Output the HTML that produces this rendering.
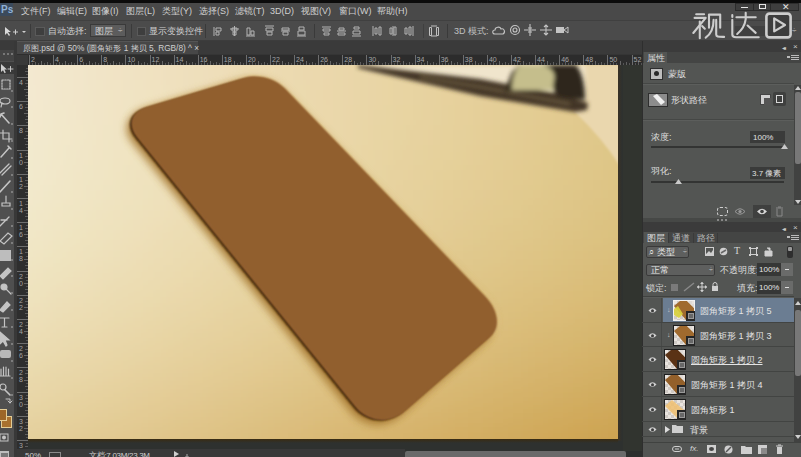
<!DOCTYPE html>
<html><head><meta charset="utf-8">
<style>
*{margin:0;padding:0;box-sizing:border-box}
html,body{width:801px;height:457px;overflow:hidden;background:#2c2e2d;font-family:"Liberation Sans",sans-serif;color:#d8d8d8}
.a{position:absolute}
.t{position:absolute;font-size:9px;line-height:10px;white-space:nowrap;color:#d0d0d0}
svg{position:absolute;overflow:visible}
</style></head><body>
<div class="a" style="left:0px;top:0px;width:801px;height:3px;background:#0b0b0b"></div>
<div class="a" style="left:0px;top:3px;width:801px;height:17px;background:#494949"></div>
<div class="a" style="left:0px;top:3px;width:13px;height:13px;background:#3b4a5c"></div>
<div class="t" style="left:1px;top:5px;font-size:10px;font-weight:bold;color:#8fb1d6">Ps</div>
<div class="t" style="left:21px;top:6px;">文件(F)</div>
<div class="t" style="left:57px;top:6px;">编辑(E)</div>
<div class="t" style="left:92px;top:6px;">图像(I)</div>
<div class="t" style="left:126px;top:6px;">图层(L)</div>
<div class="t" style="left:162px;top:6px;">类型(Y)</div>
<div class="t" style="left:199px;top:6px;">选择(S)</div>
<div class="t" style="left:235px;top:6px;">滤镜(T)</div>
<div class="t" style="left:270px;top:6px;">3D(D)</div>
<div class="t" style="left:301px;top:6px;">视图(V)</div>
<div class="t" style="left:339px;top:6px;">窗口(W)</div>
<div class="t" style="left:377px;top:6px;">帮助(H)</div>
<div class="a" style="left:735px;top:3px;width:64px;height:8px;background:#3e3e3e;border:1px solid #2c2c2c"></div>
<div class="a" style="left:741px;top:7px;width:7px;height:1px;background:#e6e6e6"></div>
<div class="a" style="left:753px;top:3px;width:1px;height:8px;background:#2a2a2a"></div>
<div class="a" style="left:759px;top:4px;width:7px;height:5px;border:1px solid #e6e6e6"></div>
<div class="a" style="left:770px;top:3px;width:1px;height:8px;background:#2a2a2a"></div>
<div class="t" style="left:782px;top:2px;font-size:9px;color:#e6e6e6">✕</div>
<div class="a" style="left:0px;top:20px;width:801px;height:21px;background:#4b4b4b;border-top:1px solid #404040;border-bottom:1px solid #3c3c3c"></div>
<svg style="left:4px;top:26px" width="22" height="12"><path d="M1 1 L1 9 L3 7 L5 10 L6 9 L4 6 L7 6 Z" fill="#d8d8d8"/><path d="M9 6 h5 M11.5 3.5 v5" stroke="#cfcfcf" stroke-width="1"/><path d="M18 5 h4 l-2 2z" fill="#cfcfcf"/></svg>
<div class="a" style="left:30px;top:24px;width:1px;height:14px;background:#3a3a3a"></div>
<div class="a" style="left:35px;top:27px;width:10px;height:9px;background:#3e3e3e;border:1px solid #5a5a5a"></div>
<div class="t" style="left:48px;top:26px;">自动选择:</div>
<div class="a" style="left:90px;top:24px;width:36px;height:13px;background:#5c5c5c;border:1px solid #3a3a3a"></div>
<div class="t" style="left:95px;top:26px;">图层</div>
<div class="t" style="left:118px;top:26px;font-size:8px">÷</div>
<div class="a" style="left:131px;top:24px;width:1px;height:14px;background:#3a3a3a"></div>
<div class="a" style="left:137px;top:27px;width:9px;height:9px;background:#3e3e3e;border:1px solid #5a5a5a"></div>
<div class="t" style="left:149px;top:26px;">显示变换控件</div>
<div class="a" style="left:205px;top:24px;width:1px;height:14px;background:#3a3a3a"></div>
<svg style="left:213px;top:25px" width="12" height="12"><path d="M1 2v9 M3 3h5v3h-5z M3 7h3v3h-3z" stroke="#b4b4b4" fill="none" stroke-width="1"/></svg>
<svg style="left:229px;top:25px" width="12" height="12"><path d="M5.5 1v10 M1 4h9 M3 3h5v3h-5z M4 7h3v3h-3z" stroke="#b4b4b4" fill="none" stroke-width="1"/></svg>
<svg style="left:245px;top:25px" width="12" height="12"><path d="M1 11h9 M2 3h3v7h-3z M6 6h3v4h-3z" stroke="#b4b4b4" fill="none" stroke-width="1"/></svg>
<svg style="left:264px;top:25px" width="12" height="12"><path d="M1 1h9 M2 3h7v3h-7z M3 7h5v3h-5z" stroke="#b4b4b4" fill="none" stroke-width="1"/></svg>
<svg style="left:280px;top:25px" width="12" height="12"><path d="M1 6h9 M2 3h7v2h-7z M3 7h5v3h-5z" stroke="#b4b4b4" fill="none" stroke-width="1"/></svg>
<svg style="left:296px;top:25px" width="12" height="12"><path d="M1 11h9 M3 2h5v3h-5z M2 6h7v4h-7z" stroke="#b4b4b4" fill="none" stroke-width="1"/></svg>
<div class="a" style="left:314px;top:24px;width:1px;height:14px;background:#3a3a3a"></div>
<svg style="left:321px;top:25px" width="12" height="12"><path d="M1 2h9 M2 4h7v2h-7z M3 8h5v2h-5z" stroke="#b4b4b4" fill="none" stroke-width="1"/></svg>
<svg style="left:336px;top:25px" width="12" height="12"><path d="M1 6h9 M3 3h5v2h-5z M2 8h7v2h-7z" stroke="#b4b4b4" fill="none" stroke-width="1"/></svg>
<svg style="left:351px;top:25px" width="12" height="12"><path d="M1 11h9 M3 2h5v2h-5z M2 6h7v3h-7z" stroke="#b4b4b4" fill="none" stroke-width="1"/></svg>
<svg style="left:371px;top:25px" width="12" height="12"><path d="M2 1v10 M4 3h2v6h-2z M8 2h2v8h-2z" stroke="#b4b4b4" fill="none" stroke-width="1"/></svg>
<svg style="left:387px;top:25px" width="12" height="12"><path d="M6 1v10 M3 3h2v6h-2z M7 2h2v8h-2z" stroke="#b4b4b4" fill="none" stroke-width="1"/></svg>
<svg style="left:403px;top:25px" width="12" height="12"><path d="M10 1v10 M2 3h2v6h-2z M6 2h2v8h-2z" stroke="#b4b4b4" fill="none" stroke-width="1"/></svg>
<div class="a" style="left:423px;top:24px;width:1px;height:14px;background:#3f3f3f"></div>
<svg style="left:428px;top:25px" width="12" height="12"><path d="M1.5 2.5h2v8h-2z M8.5 2.5h2v8h-2z M3 1h6 M3 11h6" stroke="#c0c0c0" fill="none"/></svg>
<div class="a" style="left:447px;top:24px;width:1px;height:14px;background:#3a3a3a"></div>
<div class="t" style="left:454px;top:26px;color:#c0c0c0">3D 模式:</div>
<svg style="left:490px;top:23px" width="80" height="14"><g fill="none" stroke="#c4c4c4" stroke-width="1.1"><path d="M5,11 C2,11 2,7 5,7 C5,4 10,3 11,6 C14,5 16,9 13,11 Z"/><circle cx="25" cy="7" r="4.5"/><circle cx="25" cy="7" r="2"/><path d="M40,1 v12 M34,7 h12 M38,5 h4 M38,9 h4"/><path d="M56,2 v10 M50,7 h12 M54,4 l2,-2 l2,2 M54,10 l2,2 l2,-2"/></g><rect x="66" y="4" width="8" height="6" fill="#c4c4c4"/><path d="M74,7 L78,4 V10 Z" fill="none" stroke="#c4c4c4"/></svg>
<div class="a" style="left:735px;top:26px;width:56px;height:10px;background:#404040"></div>
<div class="t" style="left:792px;top:26px;font-size:8px">÷</div>
<svg style="left:0;top:0" width="801" height="457"><g fill="none" stroke="#cdcdcd" stroke-width="2.1" stroke-linecap="round" stroke-linejoin="round"><path d="M696.2,14.3 L704.1,14.3"/><path d="M694.6,17.9 L705.7,17.9 L693.3,33"/><path d="M699.8,21.5 L699.8,38.2"/><path d="M702.1,26 L704.8,28.7"/><path d="M709,27.7 L709,14.6 L720.2,14.6 L720.2,27.7"/><path d="M713.6,19.8 C713.6,28 711,34 705.7,37.6"/><path d="M716.2,19.8 L716.2,34.5 C716.2,36.5 717.5,37 724.1,36.9"/><path d="M732.3,15 L732.3,16.9"/><path d="M732.3,19.9 L732.3,34.5 C732.3,36.5 733.5,37.2 736,37.2 L758.7,37.2"/><path d="M736.4,17.3 L755.7,17.3"/><path d="M745.7,12.8 L745.7,19.2 C745,25 741.5,30.5 737.2,34"/><path d="M747.6,25.5 L755.7,32.9"/></g><rect x="766.4" y="13.6" width="24.2" height="23.8" rx="3" fill="#3d3d3d" stroke="#cdcdcd" stroke-width="2.6"/><path d="M774.2,18.4 L774.2,31.4 L785,25 Z" fill="none" stroke="#cdcdcd" stroke-width="2.2" stroke-linejoin="round"/></svg>
<div class="a" style="left:0px;top:41px;width:801px;height:13px;background:#3a3a3a"></div>
<div class="a" style="left:17px;top:41px;width:181px;height:13px;background:#474747;border-top:1px solid #555"></div>
<div class="t" style="left:23px;top:43px;font-size:8.3px;color:#d0d0d0">原图.psd @ 50% (圆角矩形 1 拷贝 5, RGB/8) ^ ×</div>
<div class="a" style="left:0px;top:50px;width:14px;height:407px;background:#4f4f4f"></div>
<div class="a" style="left:0px;top:50px;width:14px;height:11px;background:#444"></div>
<div class="a" style="left:3px;top:53px;width:2px;height:2px;background:#777"></div>
<div class="a" style="left:7px;top:53px;width:2px;height:2px;background:#777"></div>
<div class="a" style="left:11px;top:53px;width:2px;height:2px;background:#777"></div>
<div class="a" style="left:14px;top:41px;width:3px;height:416px;background:#383838"></div>
<div class="a" style="left:0px;top:62px;width:14px;height:12px;background:#3a3a3a"></div>
<svg style="left:0;top:0" width="17" height="457"><g fill="none" stroke="#c4c4c4" stroke-width="1.2" stroke-linecap="round"><path d="M1,64 L1,72 L3,70.2 L4.6,73.2 L5.8,72.6 L4.4,69.6 L7,69.4 Z" fill="#d0d0d0" stroke="none"/><path d="M8,69 h5 M10.5,66.5 v5" stroke-width="1"/><path d="M2,80 h8 v9 h-8 z" stroke-dasharray="1.5,1.2"/><ellipse cx="5" cy="101" rx="5" ry="3"/><path d="M2,103 L1,107"/><path d="M1,114 L9,123 M1,114 l3,-1 M1,114 l-1,3" stroke-width="1.6"/><path d="M3,130 v9 h9 M0,133 h9 v9"/><path d="M1,157 L9,148 M8,146 l3,3" stroke-width="1.5"/><path d="M0,173 L9,164 M2,175 L11,166" stroke-width="1.3"/><path d="M0,192 L10,181" stroke-width="1.6"/><path d="M6,196 v6 M2,203 h8 v3 h-8 z" /><path d="M0,226 L9,217 M1,220 h6" stroke-width="1.3"/><path d="M0,241 L8,233 L12,236 L4,244 Z" /></g><rect x="0" y="250" width="11" height="11" fill="#d0d0d0" opacity="0.85"/><g fill="none" stroke="#c4c4c4" stroke-width="1.2" stroke-linecap="round"><path d="M0,276 L8,268 L11,271 L3,279 Z" fill="#c4c4c4"/><circle cx="4" cy="287" r="3" fill="#c4c4c4"/><path d="M6,289 L11,294"/><path d="M0,310 L7,302 L10,305 L3,312 Z" fill="#c4c4c4"/><path d="M0,318 h9 M4.5,318 v9 M2,327 h5"/><path d="M0,332 L0,344 L3,341 L6,346 L7,345 L5,340 L9,340 Z" fill="#c4c4c4"/><rect x="0" y="350" width="11" height="8" rx="2" fill="#b8b8b8" stroke="none"/><path d="M1,375 v-6 M3.5,375 v-8 M6,375 v-8 M8.5,375 v-6 M0,376 h10" /><circle cx="3" cy="387" r="3"/><path d="M5,390 L10,395" stroke-width="1.6"/><path d="M6,399 h4 v4 M8,401 l2,2 l2,-2" stroke-width="1"/></g><rect x="1.5" y="416.5" width="10" height="11" fill="#a8712f" stroke="#e3cc95" stroke-width="1"/><rect x="-0.5" y="409.5" width="7" height="11" fill="#9d6627" stroke="#e3cc95" stroke-width="1"/><rect x="0" y="434" width="8" height="7" fill="none" stroke="#c4c4c4"/><circle cx="4" cy="437.5" r="2" fill="#c4c4c4"/><rect x="0" y="451" width="9" height="6" fill="#bdbdbd"/><rect x="1" y="453" width="7" height="4" fill="#777"/></svg>
<div class="a" style="left:10.5px;top:89.5px;width:2px;height:2px;border-radius:1px;background:#8c8c8c"></div>
<div class="a" style="left:10.5px;top:106.4px;width:2px;height:2px;border-radius:1px;background:#8c8c8c"></div>
<div class="a" style="left:10.5px;top:123.3px;width:2px;height:2px;border-radius:1px;background:#8c8c8c"></div>
<div class="a" style="left:10.5px;top:140.2px;width:2px;height:2px;border-radius:1px;background:#8c8c8c"></div>
<div class="a" style="left:10.5px;top:157.1px;width:2px;height:2px;border-radius:1px;background:#8c8c8c"></div>
<div class="a" style="left:10.5px;top:174.0px;width:2px;height:2px;border-radius:1px;background:#8c8c8c"></div>
<div class="a" style="left:10.5px;top:190.9px;width:2px;height:2px;border-radius:1px;background:#8c8c8c"></div>
<div class="a" style="left:10.5px;top:207.8px;width:2px;height:2px;border-radius:1px;background:#8c8c8c"></div>
<div class="a" style="left:10.5px;top:224.7px;width:2px;height:2px;border-radius:1px;background:#8c8c8c"></div>
<div class="a" style="left:10.5px;top:241.6px;width:2px;height:2px;border-radius:1px;background:#8c8c8c"></div>
<div class="a" style="left:10.5px;top:258.5px;width:2px;height:2px;border-radius:1px;background:#8c8c8c"></div>
<div class="a" style="left:10.5px;top:275.4px;width:2px;height:2px;border-radius:1px;background:#8c8c8c"></div>
<div class="a" style="left:10.5px;top:292.3px;width:2px;height:2px;border-radius:1px;background:#8c8c8c"></div>
<div class="a" style="left:10.5px;top:309.2px;width:2px;height:2px;border-radius:1px;background:#8c8c8c"></div>
<div class="a" style="left:10.5px;top:326.1px;width:2px;height:2px;border-radius:1px;background:#8c8c8c"></div>
<div class="a" style="left:10.5px;top:343.0px;width:2px;height:2px;border-radius:1px;background:#8c8c8c"></div>
<div class="a" style="left:10.5px;top:359.9px;width:2px;height:2px;border-radius:1px;background:#8c8c8c"></div>
<div class="a" style="left:10.5px;top:376.8px;width:2px;height:2px;border-radius:1px;background:#8c8c8c"></div>
<div class="a" style="left:10.5px;top:393.7px;width:2px;height:2px;border-radius:1px;background:#8c8c8c"></div>
<div class="a" style="left:17px;top:54px;width:625px;height:11px;background:#2c2c2c;border-top:1px solid #353535"></div>
<div class="a" style="left:17px;top:54px;width:11px;height:397px;background:#2e2e2e"></div>
<div class="a" style="left:29.0px;top:55px;width:1px;height:10px;background:#6e6e6e"></div>
<div class="t" style="left:31.0px;top:56px;font-size:7px;line-height:7px;color:#a4a4a4">2</div>
<div class="a" style="left:32.0px;top:63px;width:1px;height:2px;background:#555"></div>
<div class="a" style="left:35.0px;top:62px;width:1px;height:3px;background:#5e5e5e"></div>
<div class="a" style="left:38.0px;top:63px;width:1px;height:2px;background:#555"></div>
<div class="a" style="left:41.1px;top:61px;width:1px;height:4px;background:#666"></div>
<div class="a" style="left:44.1px;top:63px;width:1px;height:2px;background:#555"></div>
<div class="a" style="left:47.1px;top:62px;width:1px;height:3px;background:#5e5e5e"></div>
<div class="a" style="left:50.1px;top:63px;width:1px;height:2px;background:#555"></div>
<div class="a" style="left:53.1px;top:55px;width:1px;height:10px;background:#6e6e6e"></div>
<div class="t" style="left:55.1px;top:56px;font-size:7px;line-height:7px;color:#a4a4a4">4</div>
<div class="a" style="left:56.1px;top:63px;width:1px;height:2px;background:#555"></div>
<div class="a" style="left:59.1px;top:62px;width:1px;height:3px;background:#5e5e5e"></div>
<div class="a" style="left:62.1px;top:63px;width:1px;height:2px;background:#555"></div>
<div class="a" style="left:65.2px;top:61px;width:1px;height:4px;background:#666"></div>
<div class="a" style="left:68.2px;top:63px;width:1px;height:2px;background:#555"></div>
<div class="a" style="left:71.2px;top:62px;width:1px;height:3px;background:#5e5e5e"></div>
<div class="a" style="left:74.2px;top:63px;width:1px;height:2px;background:#555"></div>
<div class="a" style="left:77.2px;top:55px;width:1px;height:10px;background:#6e6e6e"></div>
<div class="t" style="left:79.2px;top:56px;font-size:7px;line-height:7px;color:#a4a4a4">6</div>
<div class="a" style="left:80.2px;top:63px;width:1px;height:2px;background:#555"></div>
<div class="a" style="left:83.2px;top:62px;width:1px;height:3px;background:#5e5e5e"></div>
<div class="a" style="left:86.2px;top:63px;width:1px;height:2px;background:#555"></div>
<div class="a" style="left:89.3px;top:61px;width:1px;height:4px;background:#666"></div>
<div class="a" style="left:92.3px;top:63px;width:1px;height:2px;background:#555"></div>
<div class="a" style="left:95.3px;top:62px;width:1px;height:3px;background:#5e5e5e"></div>
<div class="a" style="left:98.3px;top:63px;width:1px;height:2px;background:#555"></div>
<div class="a" style="left:101.3px;top:55px;width:1px;height:10px;background:#6e6e6e"></div>
<div class="t" style="left:103.3px;top:56px;font-size:7px;line-height:7px;color:#a4a4a4">8</div>
<div class="a" style="left:104.3px;top:63px;width:1px;height:2px;background:#555"></div>
<div class="a" style="left:107.3px;top:62px;width:1px;height:3px;background:#5e5e5e"></div>
<div class="a" style="left:110.3px;top:63px;width:1px;height:2px;background:#555"></div>
<div class="a" style="left:113.4px;top:61px;width:1px;height:4px;background:#666"></div>
<div class="a" style="left:116.4px;top:63px;width:1px;height:2px;background:#555"></div>
<div class="a" style="left:119.4px;top:62px;width:1px;height:3px;background:#5e5e5e"></div>
<div class="a" style="left:122.4px;top:63px;width:1px;height:2px;background:#555"></div>
<div class="a" style="left:125.4px;top:55px;width:1px;height:10px;background:#6e6e6e"></div>
<div class="t" style="left:127.4px;top:56px;font-size:7px;line-height:7px;color:#a4a4a4">10</div>
<div class="a" style="left:128.4px;top:63px;width:1px;height:2px;background:#555"></div>
<div class="a" style="left:131.4px;top:62px;width:1px;height:3px;background:#5e5e5e"></div>
<div class="a" style="left:134.4px;top:63px;width:1px;height:2px;background:#555"></div>
<div class="a" style="left:137.5px;top:61px;width:1px;height:4px;background:#666"></div>
<div class="a" style="left:140.5px;top:63px;width:1px;height:2px;background:#555"></div>
<div class="a" style="left:143.5px;top:62px;width:1px;height:3px;background:#5e5e5e"></div>
<div class="a" style="left:146.5px;top:63px;width:1px;height:2px;background:#555"></div>
<div class="a" style="left:149.5px;top:55px;width:1px;height:10px;background:#6e6e6e"></div>
<div class="t" style="left:151.5px;top:56px;font-size:7px;line-height:7px;color:#a4a4a4">12</div>
<div class="a" style="left:152.5px;top:63px;width:1px;height:2px;background:#555"></div>
<div class="a" style="left:155.5px;top:62px;width:1px;height:3px;background:#5e5e5e"></div>
<div class="a" style="left:158.5px;top:63px;width:1px;height:2px;background:#555"></div>
<div class="a" style="left:161.6px;top:61px;width:1px;height:4px;background:#666"></div>
<div class="a" style="left:164.6px;top:63px;width:1px;height:2px;background:#555"></div>
<div class="a" style="left:167.6px;top:62px;width:1px;height:3px;background:#5e5e5e"></div>
<div class="a" style="left:170.6px;top:63px;width:1px;height:2px;background:#555"></div>
<div class="a" style="left:173.6px;top:55px;width:1px;height:10px;background:#6e6e6e"></div>
<div class="t" style="left:175.6px;top:56px;font-size:7px;line-height:7px;color:#a4a4a4">14</div>
<div class="a" style="left:176.6px;top:63px;width:1px;height:2px;background:#555"></div>
<div class="a" style="left:179.6px;top:62px;width:1px;height:3px;background:#5e5e5e"></div>
<div class="a" style="left:182.6px;top:63px;width:1px;height:2px;background:#555"></div>
<div class="a" style="left:185.7px;top:61px;width:1px;height:4px;background:#666"></div>
<div class="a" style="left:188.7px;top:63px;width:1px;height:2px;background:#555"></div>
<div class="a" style="left:191.7px;top:62px;width:1px;height:3px;background:#5e5e5e"></div>
<div class="a" style="left:194.7px;top:63px;width:1px;height:2px;background:#555"></div>
<div class="a" style="left:197.7px;top:55px;width:1px;height:10px;background:#6e6e6e"></div>
<div class="t" style="left:199.7px;top:56px;font-size:7px;line-height:7px;color:#a4a4a4">16</div>
<div class="a" style="left:200.7px;top:63px;width:1px;height:2px;background:#555"></div>
<div class="a" style="left:203.7px;top:62px;width:1px;height:3px;background:#5e5e5e"></div>
<div class="a" style="left:206.7px;top:63px;width:1px;height:2px;background:#555"></div>
<div class="a" style="left:209.8px;top:61px;width:1px;height:4px;background:#666"></div>
<div class="a" style="left:212.8px;top:63px;width:1px;height:2px;background:#555"></div>
<div class="a" style="left:215.8px;top:62px;width:1px;height:3px;background:#5e5e5e"></div>
<div class="a" style="left:218.8px;top:63px;width:1px;height:2px;background:#555"></div>
<div class="a" style="left:221.8px;top:55px;width:1px;height:10px;background:#6e6e6e"></div>
<div class="t" style="left:223.8px;top:56px;font-size:7px;line-height:7px;color:#a4a4a4">18</div>
<div class="a" style="left:224.8px;top:63px;width:1px;height:2px;background:#555"></div>
<div class="a" style="left:227.8px;top:62px;width:1px;height:3px;background:#5e5e5e"></div>
<div class="a" style="left:230.8px;top:63px;width:1px;height:2px;background:#555"></div>
<div class="a" style="left:233.9px;top:61px;width:1px;height:4px;background:#666"></div>
<div class="a" style="left:236.9px;top:63px;width:1px;height:2px;background:#555"></div>
<div class="a" style="left:239.9px;top:62px;width:1px;height:3px;background:#5e5e5e"></div>
<div class="a" style="left:242.9px;top:63px;width:1px;height:2px;background:#555"></div>
<div class="a" style="left:245.9px;top:55px;width:1px;height:10px;background:#6e6e6e"></div>
<div class="t" style="left:247.9px;top:56px;font-size:7px;line-height:7px;color:#a4a4a4">20</div>
<div class="a" style="left:248.9px;top:63px;width:1px;height:2px;background:#555"></div>
<div class="a" style="left:251.9px;top:62px;width:1px;height:3px;background:#5e5e5e"></div>
<div class="a" style="left:254.9px;top:63px;width:1px;height:2px;background:#555"></div>
<div class="a" style="left:257.9px;top:61px;width:1px;height:4px;background:#666"></div>
<div class="a" style="left:261.0px;top:63px;width:1px;height:2px;background:#555"></div>
<div class="a" style="left:264.0px;top:62px;width:1px;height:3px;background:#5e5e5e"></div>
<div class="a" style="left:267.0px;top:63px;width:1px;height:2px;background:#555"></div>
<div class="a" style="left:270.0px;top:55px;width:1px;height:10px;background:#6e6e6e"></div>
<div class="t" style="left:272.0px;top:56px;font-size:7px;line-height:7px;color:#a4a4a4">22</div>
<div class="a" style="left:273.0px;top:63px;width:1px;height:2px;background:#555"></div>
<div class="a" style="left:276.0px;top:62px;width:1px;height:3px;background:#5e5e5e"></div>
<div class="a" style="left:279.0px;top:63px;width:1px;height:2px;background:#555"></div>
<div class="a" style="left:282.1px;top:61px;width:1px;height:4px;background:#666"></div>
<div class="a" style="left:285.1px;top:63px;width:1px;height:2px;background:#555"></div>
<div class="a" style="left:288.1px;top:62px;width:1px;height:3px;background:#5e5e5e"></div>
<div class="a" style="left:291.1px;top:63px;width:1px;height:2px;background:#555"></div>
<div class="a" style="left:294.1px;top:55px;width:1px;height:10px;background:#6e6e6e"></div>
<div class="t" style="left:296.1px;top:56px;font-size:7px;line-height:7px;color:#a4a4a4">24</div>
<div class="a" style="left:297.1px;top:63px;width:1px;height:2px;background:#555"></div>
<div class="a" style="left:300.1px;top:62px;width:1px;height:3px;background:#5e5e5e"></div>
<div class="a" style="left:303.1px;top:63px;width:1px;height:2px;background:#555"></div>
<div class="a" style="left:306.1px;top:61px;width:1px;height:4px;background:#666"></div>
<div class="a" style="left:309.2px;top:63px;width:1px;height:2px;background:#555"></div>
<div class="a" style="left:312.2px;top:62px;width:1px;height:3px;background:#5e5e5e"></div>
<div class="a" style="left:315.2px;top:63px;width:1px;height:2px;background:#555"></div>
<div class="a" style="left:318.2px;top:55px;width:1px;height:10px;background:#6e6e6e"></div>
<div class="t" style="left:320.2px;top:56px;font-size:7px;line-height:7px;color:#a4a4a4">26</div>
<div class="a" style="left:321.2px;top:63px;width:1px;height:2px;background:#555"></div>
<div class="a" style="left:324.2px;top:62px;width:1px;height:3px;background:#5e5e5e"></div>
<div class="a" style="left:327.2px;top:63px;width:1px;height:2px;background:#555"></div>
<div class="a" style="left:330.2px;top:61px;width:1px;height:4px;background:#666"></div>
<div class="a" style="left:333.3px;top:63px;width:1px;height:2px;background:#555"></div>
<div class="a" style="left:336.3px;top:62px;width:1px;height:3px;background:#5e5e5e"></div>
<div class="a" style="left:339.3px;top:63px;width:1px;height:2px;background:#555"></div>
<div class="a" style="left:342.3px;top:55px;width:1px;height:10px;background:#6e6e6e"></div>
<div class="t" style="left:344.3px;top:56px;font-size:7px;line-height:7px;color:#a4a4a4">28</div>
<div class="a" style="left:345.3px;top:63px;width:1px;height:2px;background:#555"></div>
<div class="a" style="left:348.3px;top:62px;width:1px;height:3px;background:#5e5e5e"></div>
<div class="a" style="left:351.3px;top:63px;width:1px;height:2px;background:#555"></div>
<div class="a" style="left:354.4px;top:61px;width:1px;height:4px;background:#666"></div>
<div class="a" style="left:357.4px;top:63px;width:1px;height:2px;background:#555"></div>
<div class="a" style="left:360.4px;top:62px;width:1px;height:3px;background:#5e5e5e"></div>
<div class="a" style="left:363.4px;top:63px;width:1px;height:2px;background:#555"></div>
<div class="a" style="left:366.4px;top:55px;width:1px;height:10px;background:#6e6e6e"></div>
<div class="t" style="left:368.4px;top:56px;font-size:7px;line-height:7px;color:#a4a4a4">30</div>
<div class="a" style="left:369.4px;top:63px;width:1px;height:2px;background:#555"></div>
<div class="a" style="left:372.4px;top:62px;width:1px;height:3px;background:#5e5e5e"></div>
<div class="a" style="left:375.4px;top:63px;width:1px;height:2px;background:#555"></div>
<div class="a" style="left:378.4px;top:61px;width:1px;height:4px;background:#666"></div>
<div class="a" style="left:381.5px;top:63px;width:1px;height:2px;background:#555"></div>
<div class="a" style="left:384.5px;top:62px;width:1px;height:3px;background:#5e5e5e"></div>
<div class="a" style="left:387.5px;top:63px;width:1px;height:2px;background:#555"></div>
<div class="a" style="left:390.5px;top:55px;width:1px;height:10px;background:#6e6e6e"></div>
<div class="t" style="left:392.5px;top:56px;font-size:7px;line-height:7px;color:#a4a4a4">32</div>
<div class="a" style="left:393.5px;top:63px;width:1px;height:2px;background:#555"></div>
<div class="a" style="left:396.5px;top:62px;width:1px;height:3px;background:#5e5e5e"></div>
<div class="a" style="left:399.5px;top:63px;width:1px;height:2px;background:#555"></div>
<div class="a" style="left:402.6px;top:61px;width:1px;height:4px;background:#666"></div>
<div class="a" style="left:405.6px;top:63px;width:1px;height:2px;background:#555"></div>
<div class="a" style="left:408.6px;top:62px;width:1px;height:3px;background:#5e5e5e"></div>
<div class="a" style="left:411.6px;top:63px;width:1px;height:2px;background:#555"></div>
<div class="a" style="left:414.6px;top:55px;width:1px;height:10px;background:#6e6e6e"></div>
<div class="t" style="left:416.6px;top:56px;font-size:7px;line-height:7px;color:#a4a4a4">34</div>
<div class="a" style="left:417.6px;top:63px;width:1px;height:2px;background:#555"></div>
<div class="a" style="left:420.6px;top:62px;width:1px;height:3px;background:#5e5e5e"></div>
<div class="a" style="left:423.6px;top:63px;width:1px;height:2px;background:#555"></div>
<div class="a" style="left:426.6px;top:61px;width:1px;height:4px;background:#666"></div>
<div class="a" style="left:429.7px;top:63px;width:1px;height:2px;background:#555"></div>
<div class="a" style="left:432.7px;top:62px;width:1px;height:3px;background:#5e5e5e"></div>
<div class="a" style="left:435.7px;top:63px;width:1px;height:2px;background:#555"></div>
<div class="a" style="left:438.7px;top:55px;width:1px;height:10px;background:#6e6e6e"></div>
<div class="t" style="left:440.7px;top:56px;font-size:7px;line-height:7px;color:#a4a4a4">36</div>
<div class="a" style="left:441.7px;top:63px;width:1px;height:2px;background:#555"></div>
<div class="a" style="left:444.7px;top:62px;width:1px;height:3px;background:#5e5e5e"></div>
<div class="a" style="left:447.7px;top:63px;width:1px;height:2px;background:#555"></div>
<div class="a" style="left:450.8px;top:61px;width:1px;height:4px;background:#666"></div>
<div class="a" style="left:453.8px;top:63px;width:1px;height:2px;background:#555"></div>
<div class="a" style="left:456.8px;top:62px;width:1px;height:3px;background:#5e5e5e"></div>
<div class="a" style="left:459.8px;top:63px;width:1px;height:2px;background:#555"></div>
<div class="a" style="left:462.8px;top:55px;width:1px;height:10px;background:#6e6e6e"></div>
<div class="t" style="left:464.8px;top:56px;font-size:7px;line-height:7px;color:#a4a4a4">38</div>
<div class="a" style="left:465.8px;top:63px;width:1px;height:2px;background:#555"></div>
<div class="a" style="left:468.8px;top:62px;width:1px;height:3px;background:#5e5e5e"></div>
<div class="a" style="left:471.8px;top:63px;width:1px;height:2px;background:#555"></div>
<div class="a" style="left:474.9px;top:61px;width:1px;height:4px;background:#666"></div>
<div class="a" style="left:477.9px;top:63px;width:1px;height:2px;background:#555"></div>
<div class="a" style="left:480.9px;top:62px;width:1px;height:3px;background:#5e5e5e"></div>
<div class="a" style="left:483.9px;top:63px;width:1px;height:2px;background:#555"></div>
<div class="a" style="left:486.9px;top:55px;width:1px;height:10px;background:#6e6e6e"></div>
<div class="t" style="left:488.9px;top:56px;font-size:7px;line-height:7px;color:#a4a4a4">40</div>
<div class="a" style="left:489.9px;top:63px;width:1px;height:2px;background:#555"></div>
<div class="a" style="left:492.9px;top:62px;width:1px;height:3px;background:#5e5e5e"></div>
<div class="a" style="left:495.9px;top:63px;width:1px;height:2px;background:#555"></div>
<div class="a" style="left:498.9px;top:61px;width:1px;height:4px;background:#666"></div>
<div class="a" style="left:502.0px;top:63px;width:1px;height:2px;background:#555"></div>
<div class="a" style="left:505.0px;top:62px;width:1px;height:3px;background:#5e5e5e"></div>
<div class="a" style="left:508.0px;top:63px;width:1px;height:2px;background:#555"></div>
<div class="a" style="left:511.0px;top:55px;width:1px;height:10px;background:#6e6e6e"></div>
<div class="t" style="left:513.0px;top:56px;font-size:7px;line-height:7px;color:#a4a4a4">42</div>
<div class="a" style="left:514.0px;top:63px;width:1px;height:2px;background:#555"></div>
<div class="a" style="left:517.0px;top:62px;width:1px;height:3px;background:#5e5e5e"></div>
<div class="a" style="left:520.0px;top:63px;width:1px;height:2px;background:#555"></div>
<div class="a" style="left:523.0px;top:61px;width:1px;height:4px;background:#666"></div>
<div class="a" style="left:526.1px;top:63px;width:1px;height:2px;background:#555"></div>
<div class="a" style="left:529.1px;top:62px;width:1px;height:3px;background:#5e5e5e"></div>
<div class="a" style="left:532.1px;top:63px;width:1px;height:2px;background:#555"></div>
<div class="a" style="left:535.1px;top:55px;width:1px;height:10px;background:#6e6e6e"></div>
<div class="t" style="left:537.1px;top:56px;font-size:7px;line-height:7px;color:#a4a4a4">44</div>
<div class="a" style="left:538.1px;top:63px;width:1px;height:2px;background:#555"></div>
<div class="a" style="left:541.1px;top:62px;width:1px;height:3px;background:#5e5e5e"></div>
<div class="a" style="left:544.1px;top:63px;width:1px;height:2px;background:#555"></div>
<div class="a" style="left:547.1px;top:61px;width:1px;height:4px;background:#666"></div>
<div class="a" style="left:550.2px;top:63px;width:1px;height:2px;background:#555"></div>
<div class="a" style="left:553.2px;top:62px;width:1px;height:3px;background:#5e5e5e"></div>
<div class="a" style="left:556.2px;top:63px;width:1px;height:2px;background:#555"></div>
<div class="a" style="left:559.2px;top:55px;width:1px;height:10px;background:#6e6e6e"></div>
<div class="t" style="left:561.2px;top:56px;font-size:7px;line-height:7px;color:#a4a4a4">46</div>
<div class="a" style="left:562.2px;top:63px;width:1px;height:2px;background:#555"></div>
<div class="a" style="left:565.2px;top:62px;width:1px;height:3px;background:#5e5e5e"></div>
<div class="a" style="left:568.2px;top:63px;width:1px;height:2px;background:#555"></div>
<div class="a" style="left:571.2px;top:61px;width:1px;height:4px;background:#666"></div>
<div class="a" style="left:574.3px;top:63px;width:1px;height:2px;background:#555"></div>
<div class="a" style="left:577.3px;top:62px;width:1px;height:3px;background:#5e5e5e"></div>
<div class="a" style="left:580.3px;top:63px;width:1px;height:2px;background:#555"></div>
<div class="a" style="left:583.3px;top:55px;width:1px;height:10px;background:#6e6e6e"></div>
<div class="t" style="left:585.3px;top:56px;font-size:7px;line-height:7px;color:#a4a4a4">48</div>
<div class="a" style="left:586.3px;top:63px;width:1px;height:2px;background:#555"></div>
<div class="a" style="left:589.3px;top:62px;width:1px;height:3px;background:#5e5e5e"></div>
<div class="a" style="left:592.3px;top:63px;width:1px;height:2px;background:#555"></div>
<div class="a" style="left:595.4px;top:61px;width:1px;height:4px;background:#666"></div>
<div class="a" style="left:598.4px;top:63px;width:1px;height:2px;background:#555"></div>
<div class="a" style="left:601.4px;top:62px;width:1px;height:3px;background:#5e5e5e"></div>
<div class="a" style="left:604.4px;top:63px;width:1px;height:2px;background:#555"></div>
<div class="a" style="left:607.4px;top:55px;width:1px;height:10px;background:#6e6e6e"></div>
<div class="t" style="left:609.4px;top:56px;font-size:7px;line-height:7px;color:#a4a4a4">50</div>
<div class="a" style="left:610.4px;top:63px;width:1px;height:2px;background:#555"></div>
<div class="a" style="left:613.4px;top:62px;width:1px;height:3px;background:#5e5e5e"></div>
<div class="a" style="left:616.4px;top:63px;width:1px;height:2px;background:#555"></div>
<div class="a" style="left:619.5px;top:61px;width:1px;height:4px;background:#666"></div>
<div class="a" style="left:622.5px;top:63px;width:1px;height:2px;background:#555"></div>
<div class="a" style="left:625.5px;top:62px;width:1px;height:3px;background:#5e5e5e"></div>
<div class="a" style="left:628.5px;top:63px;width:1px;height:2px;background:#555"></div>
<div class="a" style="left:631.5px;top:55px;width:1px;height:10px;background:#6e6e6e"></div>
<div class="t" style="left:633.5px;top:56px;font-size:7px;line-height:7px;color:#a4a4a4">52</div>
<div class="a" style="left:634.5px;top:63px;width:1px;height:2px;background:#555"></div>
<div class="a" style="left:637.5px;top:62px;width:1px;height:3px;background:#5e5e5e"></div>
<div class="a" style="left:640.5px;top:63px;width:1px;height:2px;background:#555"></div>
<div class="a" style="left:26px;top:67.9px;width:2px;height:1px;background:#555"></div>
<div class="a" style="left:25px;top:71.0px;width:3px;height:1px;background:#5e5e5e"></div>
<div class="a" style="left:26px;top:74.0px;width:2px;height:1px;background:#555"></div>
<div class="a" style="left:17px;top:77.0px;width:11px;height:1px;background:#6e6e6e"></div>
<div class="t" style="left:19px;top:79.0px;font-size:7px;line-height:7px;width:6px;white-space:normal;word-break:break-all;color:#a4a4a4">4</div>
<div class="a" style="left:26px;top:80.0px;width:2px;height:1px;background:#555"></div>
<div class="a" style="left:25px;top:83.0px;width:3px;height:1px;background:#5e5e5e"></div>
<div class="a" style="left:26px;top:86.1px;width:2px;height:1px;background:#555"></div>
<div class="a" style="left:24px;top:89.1px;width:4px;height:1px;background:#666"></div>
<div class="a" style="left:26px;top:92.1px;width:2px;height:1px;background:#555"></div>
<div class="a" style="left:25px;top:95.2px;width:3px;height:1px;background:#5e5e5e"></div>
<div class="a" style="left:26px;top:98.2px;width:2px;height:1px;background:#555"></div>
<div class="a" style="left:17px;top:101.2px;width:11px;height:1px;background:#6e6e6e"></div>
<div class="t" style="left:19px;top:103.2px;font-size:7px;line-height:7px;width:6px;white-space:normal;word-break:break-all;color:#a4a4a4">6</div>
<div class="a" style="left:26px;top:104.2px;width:2px;height:1px;background:#555"></div>
<div class="a" style="left:25px;top:107.2px;width:3px;height:1px;background:#5e5e5e"></div>
<div class="a" style="left:26px;top:110.3px;width:2px;height:1px;background:#555"></div>
<div class="a" style="left:24px;top:113.3px;width:4px;height:1px;background:#666"></div>
<div class="a" style="left:26px;top:116.3px;width:2px;height:1px;background:#555"></div>
<div class="a" style="left:25px;top:119.3px;width:3px;height:1px;background:#5e5e5e"></div>
<div class="a" style="left:26px;top:122.4px;width:2px;height:1px;background:#555"></div>
<div class="a" style="left:17px;top:125.4px;width:11px;height:1px;background:#6e6e6e"></div>
<div class="t" style="left:19px;top:127.4px;font-size:7px;line-height:7px;width:6px;white-space:normal;word-break:break-all;color:#a4a4a4">8</div>
<div class="a" style="left:26px;top:128.4px;width:2px;height:1px;background:#555"></div>
<div class="a" style="left:25px;top:131.4px;width:3px;height:1px;background:#5e5e5e"></div>
<div class="a" style="left:26px;top:134.5px;width:2px;height:1px;background:#555"></div>
<div class="a" style="left:24px;top:137.5px;width:4px;height:1px;background:#666"></div>
<div class="a" style="left:26px;top:140.5px;width:2px;height:1px;background:#555"></div>
<div class="a" style="left:25px;top:143.6px;width:3px;height:1px;background:#5e5e5e"></div>
<div class="a" style="left:26px;top:146.6px;width:2px;height:1px;background:#555"></div>
<div class="a" style="left:17px;top:149.6px;width:11px;height:1px;background:#6e6e6e"></div>
<div class="t" style="left:19px;top:151.6px;font-size:7px;line-height:7px;width:6px;white-space:normal;word-break:break-all;color:#a4a4a4">10</div>
<div class="a" style="left:26px;top:152.6px;width:2px;height:1px;background:#555"></div>
<div class="a" style="left:25px;top:155.7px;width:3px;height:1px;background:#5e5e5e"></div>
<div class="a" style="left:26px;top:158.7px;width:2px;height:1px;background:#555"></div>
<div class="a" style="left:24px;top:161.7px;width:4px;height:1px;background:#666"></div>
<div class="a" style="left:26px;top:164.7px;width:2px;height:1px;background:#555"></div>
<div class="a" style="left:25px;top:167.8px;width:3px;height:1px;background:#5e5e5e"></div>
<div class="a" style="left:26px;top:170.8px;width:2px;height:1px;background:#555"></div>
<div class="a" style="left:17px;top:173.8px;width:11px;height:1px;background:#6e6e6e"></div>
<div class="t" style="left:19px;top:175.8px;font-size:7px;line-height:7px;width:6px;white-space:normal;word-break:break-all;color:#a4a4a4">12</div>
<div class="a" style="left:26px;top:176.8px;width:2px;height:1px;background:#555"></div>
<div class="a" style="left:25px;top:179.8px;width:3px;height:1px;background:#5e5e5e"></div>
<div class="a" style="left:26px;top:182.9px;width:2px;height:1px;background:#555"></div>
<div class="a" style="left:24px;top:185.9px;width:4px;height:1px;background:#666"></div>
<div class="a" style="left:26px;top:188.9px;width:2px;height:1px;background:#555"></div>
<div class="a" style="left:25px;top:191.9px;width:3px;height:1px;background:#5e5e5e"></div>
<div class="a" style="left:26px;top:195.0px;width:2px;height:1px;background:#555"></div>
<div class="a" style="left:17px;top:198.0px;width:11px;height:1px;background:#6e6e6e"></div>
<div class="t" style="left:19px;top:200.0px;font-size:7px;line-height:7px;width:6px;white-space:normal;word-break:break-all;color:#a4a4a4">14</div>
<div class="a" style="left:26px;top:201.0px;width:2px;height:1px;background:#555"></div>
<div class="a" style="left:25px;top:204.0px;width:3px;height:1px;background:#5e5e5e"></div>
<div class="a" style="left:26px;top:207.1px;width:2px;height:1px;background:#555"></div>
<div class="a" style="left:24px;top:210.1px;width:4px;height:1px;background:#666"></div>
<div class="a" style="left:26px;top:213.1px;width:2px;height:1px;background:#555"></div>
<div class="a" style="left:25px;top:216.1px;width:3px;height:1px;background:#5e5e5e"></div>
<div class="a" style="left:26px;top:219.2px;width:2px;height:1px;background:#555"></div>
<div class="a" style="left:17px;top:222.2px;width:11px;height:1px;background:#6e6e6e"></div>
<div class="t" style="left:19px;top:224.2px;font-size:7px;line-height:7px;width:6px;white-space:normal;word-break:break-all;color:#a4a4a4">16</div>
<div class="a" style="left:26px;top:225.2px;width:2px;height:1px;background:#555"></div>
<div class="a" style="left:25px;top:228.2px;width:3px;height:1px;background:#5e5e5e"></div>
<div class="a" style="left:26px;top:231.3px;width:2px;height:1px;background:#555"></div>
<div class="a" style="left:24px;top:234.3px;width:4px;height:1px;background:#666"></div>
<div class="a" style="left:26px;top:237.3px;width:2px;height:1px;background:#555"></div>
<div class="a" style="left:25px;top:240.3px;width:3px;height:1px;background:#5e5e5e"></div>
<div class="a" style="left:26px;top:243.4px;width:2px;height:1px;background:#555"></div>
<div class="a" style="left:17px;top:246.4px;width:11px;height:1px;background:#6e6e6e"></div>
<div class="t" style="left:19px;top:248.4px;font-size:7px;line-height:7px;width:6px;white-space:normal;word-break:break-all;color:#a4a4a4">18</div>
<div class="a" style="left:26px;top:249.4px;width:2px;height:1px;background:#555"></div>
<div class="a" style="left:25px;top:252.4px;width:3px;height:1px;background:#5e5e5e"></div>
<div class="a" style="left:26px;top:255.5px;width:2px;height:1px;background:#555"></div>
<div class="a" style="left:24px;top:258.5px;width:4px;height:1px;background:#666"></div>
<div class="a" style="left:26px;top:261.5px;width:2px;height:1px;background:#555"></div>
<div class="a" style="left:25px;top:264.6px;width:3px;height:1px;background:#5e5e5e"></div>
<div class="a" style="left:26px;top:267.6px;width:2px;height:1px;background:#555"></div>
<div class="a" style="left:17px;top:270.6px;width:11px;height:1px;background:#6e6e6e"></div>
<div class="t" style="left:19px;top:272.6px;font-size:7px;line-height:7px;width:6px;white-space:normal;word-break:break-all;color:#a4a4a4">20</div>
<div class="a" style="left:26px;top:273.6px;width:2px;height:1px;background:#555"></div>
<div class="a" style="left:25px;top:276.6px;width:3px;height:1px;background:#5e5e5e"></div>
<div class="a" style="left:26px;top:279.7px;width:2px;height:1px;background:#555"></div>
<div class="a" style="left:24px;top:282.7px;width:4px;height:1px;background:#666"></div>
<div class="a" style="left:26px;top:285.7px;width:2px;height:1px;background:#555"></div>
<div class="a" style="left:25px;top:288.8px;width:3px;height:1px;background:#5e5e5e"></div>
<div class="a" style="left:26px;top:291.8px;width:2px;height:1px;background:#555"></div>
<div class="a" style="left:17px;top:294.8px;width:11px;height:1px;background:#6e6e6e"></div>
<div class="t" style="left:19px;top:296.8px;font-size:7px;line-height:7px;width:6px;white-space:normal;word-break:break-all;color:#a4a4a4">22</div>
<div class="a" style="left:26px;top:297.8px;width:2px;height:1px;background:#555"></div>
<div class="a" style="left:25px;top:300.9px;width:3px;height:1px;background:#5e5e5e"></div>
<div class="a" style="left:26px;top:303.9px;width:2px;height:1px;background:#555"></div>
<div class="a" style="left:24px;top:306.9px;width:4px;height:1px;background:#666"></div>
<div class="a" style="left:26px;top:309.9px;width:2px;height:1px;background:#555"></div>
<div class="a" style="left:25px;top:312.9px;width:3px;height:1px;background:#5e5e5e"></div>
<div class="a" style="left:26px;top:316.0px;width:2px;height:1px;background:#555"></div>
<div class="a" style="left:17px;top:319.0px;width:11px;height:1px;background:#6e6e6e"></div>
<div class="t" style="left:19px;top:321.0px;font-size:7px;line-height:7px;width:6px;white-space:normal;word-break:break-all;color:#a4a4a4">24</div>
<div class="a" style="left:26px;top:322.0px;width:2px;height:1px;background:#555"></div>
<div class="a" style="left:25px;top:325.1px;width:3px;height:1px;background:#5e5e5e"></div>
<div class="a" style="left:26px;top:328.1px;width:2px;height:1px;background:#555"></div>
<div class="a" style="left:24px;top:331.1px;width:4px;height:1px;background:#666"></div>
<div class="a" style="left:26px;top:334.1px;width:2px;height:1px;background:#555"></div>
<div class="a" style="left:25px;top:337.2px;width:3px;height:1px;background:#5e5e5e"></div>
<div class="a" style="left:26px;top:340.2px;width:2px;height:1px;background:#555"></div>
<div class="a" style="left:17px;top:343.2px;width:11px;height:1px;background:#6e6e6e"></div>
<div class="t" style="left:19px;top:345.2px;font-size:7px;line-height:7px;width:6px;white-space:normal;word-break:break-all;color:#a4a4a4">26</div>
<div class="a" style="left:26px;top:346.2px;width:2px;height:1px;background:#555"></div>
<div class="a" style="left:25px;top:349.2px;width:3px;height:1px;background:#5e5e5e"></div>
<div class="a" style="left:26px;top:352.3px;width:2px;height:1px;background:#555"></div>
<div class="a" style="left:24px;top:355.3px;width:4px;height:1px;background:#666"></div>
<div class="a" style="left:26px;top:358.3px;width:2px;height:1px;background:#555"></div>
<div class="a" style="left:25px;top:361.4px;width:3px;height:1px;background:#5e5e5e"></div>
<div class="a" style="left:26px;top:364.4px;width:2px;height:1px;background:#555"></div>
<div class="a" style="left:17px;top:367.4px;width:11px;height:1px;background:#6e6e6e"></div>
<div class="t" style="left:19px;top:369.4px;font-size:7px;line-height:7px;width:6px;white-space:normal;word-break:break-all;color:#a4a4a4">28</div>
<div class="a" style="left:26px;top:370.4px;width:2px;height:1px;background:#555"></div>
<div class="a" style="left:25px;top:373.4px;width:3px;height:1px;background:#5e5e5e"></div>
<div class="a" style="left:26px;top:376.5px;width:2px;height:1px;background:#555"></div>
<div class="a" style="left:24px;top:379.5px;width:4px;height:1px;background:#666"></div>
<div class="a" style="left:26px;top:382.5px;width:2px;height:1px;background:#555"></div>
<div class="a" style="left:25px;top:385.6px;width:3px;height:1px;background:#5e5e5e"></div>
<div class="a" style="left:26px;top:388.6px;width:2px;height:1px;background:#555"></div>
<div class="a" style="left:17px;top:391.6px;width:11px;height:1px;background:#6e6e6e"></div>
<div class="t" style="left:19px;top:393.6px;font-size:7px;line-height:7px;width:6px;white-space:normal;word-break:break-all;color:#a4a4a4">30</div>
<div class="a" style="left:26px;top:394.6px;width:2px;height:1px;background:#555"></div>
<div class="a" style="left:25px;top:397.7px;width:3px;height:1px;background:#5e5e5e"></div>
<div class="a" style="left:26px;top:400.7px;width:2px;height:1px;background:#555"></div>
<div class="a" style="left:24px;top:403.7px;width:4px;height:1px;background:#666"></div>
<div class="a" style="left:26px;top:406.7px;width:2px;height:1px;background:#555"></div>
<div class="a" style="left:25px;top:409.8px;width:3px;height:1px;background:#5e5e5e"></div>
<div class="a" style="left:26px;top:412.8px;width:2px;height:1px;background:#555"></div>
<div class="a" style="left:17px;top:415.8px;width:11px;height:1px;background:#6e6e6e"></div>
<div class="t" style="left:19px;top:417.8px;font-size:7px;line-height:7px;width:6px;white-space:normal;word-break:break-all;color:#a4a4a4">32</div>
<div class="a" style="left:26px;top:418.8px;width:2px;height:1px;background:#555"></div>
<div class="a" style="left:25px;top:421.9px;width:3px;height:1px;background:#5e5e5e"></div>
<div class="a" style="left:26px;top:424.9px;width:2px;height:1px;background:#555"></div>
<div class="a" style="left:24px;top:427.9px;width:4px;height:1px;background:#666"></div>
<div class="a" style="left:26px;top:430.9px;width:2px;height:1px;background:#555"></div>
<div class="a" style="left:25px;top:433.9px;width:3px;height:1px;background:#5e5e5e"></div>
<div class="a" style="left:26px;top:437.0px;width:2px;height:1px;background:#555"></div>
<div class="a" style="left:17px;top:440.0px;width:11px;height:1px;background:#6e6e6e"></div>
<div class="t" style="left:19px;top:442.0px;font-size:7px;line-height:7px;width:6px;white-space:normal;word-break:break-all;color:#a4a4a4">34</div>
<div class="a" style="left:26px;top:443.0px;width:2px;height:1px;background:#555"></div>
<div class="a" style="left:25px;top:446.1px;width:3px;height:1px;background:#5e5e5e"></div>
<div class="a" style="left:26px;top:449.1px;width:2px;height:1px;background:#555"></div>
<div class="a" style="left:17px;top:55px;width:11px;height:10px;background:#393939"></div>
<div class="a" style="left:28px;top:65px;width:614px;height:386px;background:#2e312f"></div>
<div class="a" style="left:623px;top:65px;width:19px;height:386px;background:#31342f"></div>
<div class="a" style="left:618px;top:65px;width:4px;height:376px;background:linear-gradient(90deg,#3a3226,#2e312f)"></div>
<div class="a" style="left:28px;top:439px;width:590px;height:4px;background:linear-gradient(#3a2c12,#2e312f)"></div>
<div class="a" style="left:17px;top:449px;width:388px;height:8px;background:#393939"></div>
<div class="t" style="left:25px;top:451px;font-size:8px;color:#cfcfcf">50%</div>
<div class="a" style="left:49px;top:452px;width:12px;height:6px;border:1px solid #8a8a8a"></div>
<div class="t" style="left:89px;top:451px;font-size:8px;letter-spacing:-0.3px;color:#cfcfcf">文档:7.03M/23.3M</div>
<svg style="left:174px;top:451px" width="16" height="6"><path d="M0 0 L5 3 L0 6Z" fill="#cfcfcf"/><path d="M11 6 h4 M13 3 v3" stroke="#aaa"/></svg>
<div class="a" style="left:405px;top:451px;width:221px;height:6px;background:#6a6a6a;border-radius:2px 2px 0 0"></div>
<svg style="left:28px;top:65px;overflow:hidden" width="590" height="374" viewBox="28 65 590 374">
<defs>
<linearGradient id="bg" gradientUnits="userSpaceOnUse" x1="28" y1="65" x2="618" y2="438">
<stop offset="0" stop-color="#f2e9ce"/><stop offset="0.45" stop-color="#e6d3a2"/><stop offset="1" stop-color="#d0a85a"/>
</linearGradient>
<linearGradient id="bot" gradientUnits="userSpaceOnUse" x1="0" y1="300" x2="0" y2="438">
<stop offset="0" stop-color="#c89a48" stop-opacity="0"/><stop offset="1" stop-color="#c89a48" stop-opacity="0.35"/>
</linearGradient>
<filter id="b4" x="-20%" y="-20%" width="140%" height="140%"><feGaussianBlur stdDeviation="4"/></filter>
<filter id="b2" x="-20%" y="-20%" width="140%" height="140%"><feGaussianBlur stdDeviation="2.2"/></filter>
<filter id="b1" x="-20%" y="-20%" width="140%" height="140%"><feGaussianBlur stdDeviation="0.8"/></filter>
<filter id="b8" x="-50%" y="-50%" width="200%" height="200%"><feGaussianBlur stdDeviation="8"/></filter>
</defs>
<g filter="url(#b8)" shape-rendering="crispEdges"><rect x="8" y="45" width="20" height="20" fill="#f3e8d1"/><rect x="28" y="45" width="20" height="20" fill="#f3e7ce"/><rect x="48" y="45" width="20" height="20" fill="#f2e6cc"/><rect x="68" y="45" width="20" height="20" fill="#f2e5c9"/><rect x="88" y="45" width="20" height="20" fill="#f1e4c7"/><rect x="108" y="45" width="20" height="20" fill="#f1e3c4"/><rect x="128" y="45" width="20" height="20" fill="#f0e1c2"/><rect x="148" y="45" width="20" height="20" fill="#efe0c0"/><rect x="168" y="45" width="20" height="20" fill="#efdfbd"/><rect x="188" y="45" width="20" height="20" fill="#eedebb"/><rect x="208" y="45" width="20" height="20" fill="#eeddb8"/><rect x="228" y="45" width="20" height="20" fill="#eddcb6"/><rect x="248" y="45" width="20" height="20" fill="#eddbb3"/><rect x="268" y="45" width="20" height="20" fill="#ecdab1"/><rect x="288" y="45" width="20" height="20" fill="#ebd9af"/><rect x="308" y="45" width="20" height="20" fill="#ebd8ac"/><rect x="328" y="45" width="20" height="20" fill="#ead7aa"/><rect x="348" y="45" width="20" height="20" fill="#e9d5a8"/><rect x="368" y="45" width="20" height="20" fill="#e9d4a5"/><rect x="388" y="45" width="20" height="20" fill="#e8d3a3"/><rect x="408" y="45" width="20" height="20" fill="#e7d2a1"/><rect x="428" y="45" width="20" height="20" fill="#e7d19e"/><rect x="448" y="45" width="20" height="20" fill="#e6d09c"/><rect x="468" y="45" width="20" height="20" fill="#e5cf9a"/><rect x="488" y="45" width="20" height="20" fill="#e4ce97"/><rect x="508" y="45" width="20" height="20" fill="#e4cd95"/><rect x="528" y="45" width="20" height="20" fill="#e3cb93"/><rect x="548" y="45" width="20" height="20" fill="#e2ca91"/><rect x="568" y="45" width="20" height="20" fill="#e1c98e"/><rect x="588" y="45" width="20" height="20" fill="#e1c88c"/><rect x="608" y="45" width="20" height="20" fill="#e0c78a"/><rect x="628" y="45" width="20" height="20" fill="#dfc688"/><rect x="8" y="65" width="20" height="20" fill="#f3e9d1"/><rect x="28" y="65" width="20" height="20" fill="#f3e8cf"/><rect x="48" y="65" width="20" height="20" fill="#f2e7cc"/><rect x="68" y="65" width="20" height="20" fill="#f2e6ca"/><rect x="88" y="65" width="20" height="20" fill="#f1e4c7"/><rect x="108" y="65" width="20" height="20" fill="#f1e3c5"/><rect x="128" y="65" width="20" height="20" fill="#f0e2c2"/><rect x="148" y="65" width="20" height="20" fill="#f0e1c0"/><rect x="168" y="65" width="20" height="20" fill="#efe0bd"/><rect x="188" y="65" width="20" height="20" fill="#eedfbb"/><rect x="208" y="65" width="20" height="20" fill="#eedeb9"/><rect x="228" y="65" width="20" height="20" fill="#edddb6"/><rect x="248" y="65" width="20" height="20" fill="#eddcb4"/><rect x="268" y="65" width="20" height="20" fill="#ecdab1"/><rect x="288" y="65" width="20" height="20" fill="#ebd9af"/><rect x="308" y="65" width="20" height="20" fill="#ebd8ad"/><rect x="328" y="65" width="20" height="20" fill="#ead7aa"/><rect x="348" y="65" width="20" height="20" fill="#e9d6a8"/><rect x="368" y="65" width="20" height="20" fill="#e9d5a5"/><rect x="388" y="65" width="20" height="20" fill="#e8d4a3"/><rect x="408" y="65" width="20" height="20" fill="#e7d3a1"/><rect x="428" y="65" width="20" height="20" fill="#e7d19e"/><rect x="448" y="65" width="20" height="20" fill="#e6d09c"/><rect x="468" y="65" width="20" height="20" fill="#e5cf9a"/><rect x="488" y="65" width="20" height="20" fill="#e4ce98"/><rect x="508" y="65" width="20" height="20" fill="#e4cd95"/><rect x="528" y="65" width="20" height="20" fill="#e3cc93"/><rect x="548" y="65" width="20" height="20" fill="#e2cb91"/><rect x="568" y="65" width="20" height="20" fill="#e1ca8f"/><rect x="588" y="65" width="20" height="20" fill="#e1c88c"/><rect x="608" y="65" width="20" height="20" fill="#e0c78a"/><rect x="628" y="65" width="20" height="20" fill="#dfc688"/><rect x="8" y="85" width="20" height="20" fill="#f3ead1"/><rect x="28" y="85" width="20" height="20" fill="#f3e8cf"/><rect x="48" y="85" width="20" height="20" fill="#f2e7cc"/><rect x="68" y="85" width="20" height="20" fill="#f2e6ca"/><rect x="88" y="85" width="20" height="20" fill="#f1e5c7"/><rect x="108" y="85" width="20" height="20" fill="#f1e4c5"/><rect x="128" y="85" width="20" height="20" fill="#f0e3c2"/><rect x="148" y="85" width="20" height="20" fill="#f0e2c0"/><rect x="168" y="85" width="20" height="20" fill="#efe0bd"/><rect x="188" y="85" width="20" height="20" fill="#eedfbb"/><rect x="208" y="85" width="20" height="20" fill="#eedeb8"/><rect x="228" y="85" width="20" height="20" fill="#edddb6"/><rect x="248" y="85" width="20" height="20" fill="#eddcb4"/><rect x="268" y="85" width="20" height="20" fill="#ecdbb1"/><rect x="288" y="85" width="20" height="20" fill="#ebdaaf"/><rect x="308" y="85" width="20" height="20" fill="#ebd8ac"/><rect x="328" y="85" width="20" height="20" fill="#ead7aa"/><rect x="348" y="85" width="20" height="20" fill="#e9d6a8"/><rect x="368" y="85" width="20" height="20" fill="#e9d5a5"/><rect x="388" y="85" width="20" height="20" fill="#e8d4a3"/><rect x="408" y="85" width="20" height="20" fill="#e7d3a1"/><rect x="428" y="85" width="20" height="20" fill="#e7d29e"/><rect x="448" y="85" width="20" height="20" fill="#e6d09c"/><rect x="468" y="85" width="20" height="20" fill="#e5cf9a"/><rect x="488" y="85" width="20" height="20" fill="#e4ce97"/><rect x="508" y="85" width="20" height="20" fill="#e4cd95"/><rect x="528" y="85" width="20" height="20" fill="#e3cc93"/><rect x="548" y="85" width="20" height="20" fill="#e2cb91"/><rect x="568" y="85" width="20" height="20" fill="#e1ca8e"/><rect x="588" y="85" width="20" height="20" fill="#e0c88c"/><rect x="608" y="85" width="20" height="20" fill="#e0c78a"/><rect x="628" y="85" width="20" height="20" fill="#dfc688"/><rect x="8" y="105" width="20" height="20" fill="#f3ead1"/><rect x="28" y="105" width="20" height="20" fill="#f3e9ce"/><rect x="48" y="105" width="20" height="20" fill="#f2e8cc"/><rect x="68" y="105" width="20" height="20" fill="#f2e6c9"/><rect x="88" y="105" width="20" height="20" fill="#f1e5c7"/><rect x="108" y="105" width="20" height="20" fill="#f1e4c4"/><rect x="128" y="105" width="20" height="20" fill="#f0e3c2"/><rect x="148" y="105" width="20" height="20" fill="#f0e2bf"/><rect x="168" y="105" width="20" height="20" fill="#efe1bd"/><rect x="188" y="105" width="20" height="20" fill="#eee0bb"/><rect x="208" y="105" width="20" height="20" fill="#eedeb8"/><rect x="228" y="105" width="20" height="20" fill="#edddb6"/><rect x="248" y="105" width="20" height="20" fill="#ecdcb3"/><rect x="268" y="105" width="20" height="20" fill="#ecdbb1"/><rect x="288" y="105" width="20" height="20" fill="#ebdaae"/><rect x="308" y="105" width="20" height="20" fill="#ebd9ac"/><rect x="328" y="105" width="20" height="20" fill="#ead7aa"/><rect x="348" y="105" width="20" height="20" fill="#e9d6a7"/><rect x="368" y="105" width="20" height="20" fill="#e8d5a5"/><rect x="388" y="105" width="20" height="20" fill="#e8d4a2"/><rect x="408" y="105" width="20" height="20" fill="#e7d3a0"/><rect x="428" y="105" width="20" height="20" fill="#e6d29e"/><rect x="448" y="105" width="20" height="20" fill="#e6d09b"/><rect x="468" y="105" width="20" height="20" fill="#e5cf99"/><rect x="488" y="105" width="20" height="20" fill="#e4ce97"/><rect x="508" y="105" width="20" height="20" fill="#e3cd95"/><rect x="528" y="105" width="20" height="20" fill="#e3cc92"/><rect x="548" y="105" width="20" height="20" fill="#e2ca90"/><rect x="568" y="105" width="20" height="20" fill="#e1c98e"/><rect x="588" y="105" width="20" height="20" fill="#e0c88b"/><rect x="608" y="105" width="20" height="20" fill="#dfc789"/><rect x="628" y="105" width="20" height="20" fill="#dfc687"/><rect x="8" y="125" width="20" height="20" fill="#f3ead0"/><rect x="28" y="125" width="20" height="20" fill="#f3e9ce"/><rect x="48" y="125" width="20" height="20" fill="#f2e8cb"/><rect x="68" y="125" width="20" height="20" fill="#f2e7c9"/><rect x="88" y="125" width="20" height="20" fill="#f1e5c6"/><rect x="108" y="125" width="20" height="20" fill="#f0e4c4"/><rect x="128" y="125" width="20" height="20" fill="#f0e3c1"/><rect x="148" y="125" width="20" height="20" fill="#efe2bf"/><rect x="168" y="125" width="20" height="20" fill="#efe1bc"/><rect x="188" y="125" width="20" height="20" fill="#eee0ba"/><rect x="208" y="125" width="20" height="20" fill="#eedeb7"/><rect x="228" y="125" width="20" height="20" fill="#edddb5"/><rect x="248" y="125" width="20" height="20" fill="#ecdcb2"/><rect x="268" y="125" width="20" height="20" fill="#ecdbb0"/><rect x="288" y="125" width="20" height="20" fill="#ebdaae"/><rect x="308" y="125" width="20" height="20" fill="#ead8ab"/><rect x="328" y="125" width="20" height="20" fill="#ead7a9"/><rect x="348" y="125" width="20" height="20" fill="#e9d6a6"/><rect x="368" y="125" width="20" height="20" fill="#e8d5a4"/><rect x="388" y="125" width="20" height="20" fill="#e7d4a2"/><rect x="408" y="125" width="20" height="20" fill="#e7d29f"/><rect x="428" y="125" width="20" height="20" fill="#e6d19d"/><rect x="448" y="125" width="20" height="20" fill="#e5d09b"/><rect x="468" y="125" width="20" height="20" fill="#e5cf98"/><rect x="488" y="125" width="20" height="20" fill="#e4ce96"/><rect x="508" y="125" width="20" height="20" fill="#e3cc94"/><rect x="528" y="125" width="20" height="20" fill="#e2cb91"/><rect x="548" y="125" width="20" height="20" fill="#e1ca8f"/><rect x="568" y="125" width="20" height="20" fill="#e1c98d"/><rect x="588" y="125" width="20" height="20" fill="#e0c88a"/><rect x="608" y="125" width="20" height="20" fill="#dfc688"/><rect x="628" y="125" width="20" height="20" fill="#dec586"/><rect x="8" y="145" width="20" height="20" fill="#f3eacf"/><rect x="28" y="145" width="20" height="20" fill="#f2e9cd"/><rect x="48" y="145" width="20" height="20" fill="#f2e8ca"/><rect x="68" y="145" width="20" height="20" fill="#f1e6c8"/><rect x="88" y="145" width="20" height="20" fill="#f1e5c5"/><rect x="108" y="145" width="20" height="20" fill="#f0e4c3"/><rect x="128" y="145" width="20" height="20" fill="#f0e3c0"/><rect x="148" y="145" width="20" height="20" fill="#efe2be"/><rect x="168" y="145" width="20" height="20" fill="#eee0bb"/><rect x="188" y="145" width="20" height="20" fill="#eedfb9"/><rect x="208" y="145" width="20" height="20" fill="#eddeb6"/><rect x="228" y="145" width="20" height="20" fill="#edddb4"/><rect x="248" y="145" width="20" height="20" fill="#ecdcb1"/><rect x="268" y="145" width="20" height="20" fill="#ebdaaf"/><rect x="288" y="145" width="20" height="20" fill="#ebd9ac"/><rect x="308" y="145" width="20" height="20" fill="#ead8aa"/><rect x="328" y="145" width="20" height="20" fill="#e9d7a8"/><rect x="348" y="145" width="20" height="20" fill="#e9d6a5"/><rect x="368" y="145" width="20" height="20" fill="#e8d4a3"/><rect x="388" y="145" width="20" height="20" fill="#e7d3a0"/><rect x="408" y="145" width="20" height="20" fill="#e6d29e"/><rect x="428" y="145" width="20" height="20" fill="#e6d19c"/><rect x="448" y="145" width="20" height="20" fill="#e5d099"/><rect x="468" y="145" width="20" height="20" fill="#e4ce97"/><rect x="488" y="145" width="20" height="20" fill="#e3cd95"/><rect x="508" y="145" width="20" height="20" fill="#e3cc92"/><rect x="528" y="145" width="20" height="20" fill="#e2cb90"/><rect x="548" y="145" width="20" height="20" fill="#e1c98e"/><rect x="568" y="145" width="20" height="20" fill="#e0c88b"/><rect x="588" y="145" width="20" height="20" fill="#dfc789"/><rect x="608" y="145" width="20" height="20" fill="#dec687"/><rect x="628" y="145" width="20" height="20" fill="#dec585"/><rect x="8" y="165" width="20" height="20" fill="#f3eace"/><rect x="28" y="165" width="20" height="20" fill="#f2e9cc"/><rect x="48" y="165" width="20" height="20" fill="#f2e7c9"/><rect x="68" y="165" width="20" height="20" fill="#f1e6c6"/><rect x="88" y="165" width="20" height="20" fill="#f0e5c4"/><rect x="108" y="165" width="20" height="20" fill="#f0e4c1"/><rect x="128" y="165" width="20" height="20" fill="#efe2bf"/><rect x="148" y="165" width="20" height="20" fill="#efe1bc"/><rect x="168" y="165" width="20" height="20" fill="#eee0ba"/><rect x="188" y="165" width="20" height="20" fill="#eddfb7"/><rect x="208" y="165" width="20" height="20" fill="#eddeb5"/><rect x="228" y="165" width="20" height="20" fill="#ecdcb2"/><rect x="248" y="165" width="20" height="20" fill="#ecdbb0"/><rect x="268" y="165" width="20" height="20" fill="#ebdaad"/><rect x="288" y="165" width="20" height="20" fill="#ead9ab"/><rect x="308" y="165" width="20" height="20" fill="#e9d7a9"/><rect x="328" y="165" width="20" height="20" fill="#e9d6a6"/><rect x="348" y="165" width="20" height="20" fill="#e8d5a4"/><rect x="368" y="165" width="20" height="20" fill="#e7d4a1"/><rect x="388" y="165" width="20" height="20" fill="#e7d29f"/><rect x="408" y="165" width="20" height="20" fill="#e6d19d"/><rect x="428" y="165" width="20" height="20" fill="#e5d09a"/><rect x="448" y="165" width="20" height="20" fill="#e4cf98"/><rect x="468" y="165" width="20" height="20" fill="#e4cd96"/><rect x="488" y="165" width="20" height="20" fill="#e3cc93"/><rect x="508" y="165" width="20" height="20" fill="#e2cb91"/><rect x="528" y="165" width="20" height="20" fill="#e1ca8e"/><rect x="548" y="165" width="20" height="20" fill="#e0c98c"/><rect x="568" y="165" width="20" height="20" fill="#e0c78a"/><rect x="588" y="165" width="20" height="20" fill="#dfc688"/><rect x="608" y="165" width="20" height="20" fill="#dec585"/><rect x="628" y="165" width="20" height="20" fill="#ddc483"/><rect x="8" y="185" width="20" height="20" fill="#f2e9cd"/><rect x="28" y="185" width="20" height="20" fill="#f2e8ca"/><rect x="48" y="185" width="20" height="20" fill="#f1e7c7"/><rect x="68" y="185" width="20" height="20" fill="#f1e6c5"/><rect x="88" y="185" width="20" height="20" fill="#f0e4c2"/><rect x="108" y="185" width="20" height="20" fill="#efe3c0"/><rect x="128" y="185" width="20" height="20" fill="#efe2bd"/><rect x="148" y="185" width="20" height="20" fill="#eee1bb"/><rect x="168" y="185" width="20" height="20" fill="#eedfb8"/><rect x="188" y="185" width="20" height="20" fill="#eddeb6"/><rect x="208" y="185" width="20" height="20" fill="#ecddb3"/><rect x="228" y="185" width="20" height="20" fill="#ecdcb1"/><rect x="248" y="185" width="20" height="20" fill="#ebdaae"/><rect x="268" y="185" width="20" height="20" fill="#ead9ac"/><rect x="288" y="185" width="20" height="20" fill="#ead8a9"/><rect x="308" y="185" width="20" height="20" fill="#e9d7a7"/><rect x="328" y="185" width="20" height="20" fill="#e8d5a4"/><rect x="348" y="185" width="20" height="20" fill="#e7d4a2"/><rect x="368" y="185" width="20" height="20" fill="#e7d3a0"/><rect x="388" y="185" width="20" height="20" fill="#e6d19d"/><rect x="408" y="185" width="20" height="20" fill="#e5d09b"/><rect x="428" y="185" width="20" height="20" fill="#e5cf98"/><rect x="448" y="185" width="20" height="20" fill="#e4ce96"/><rect x="468" y="185" width="20" height="20" fill="#e3cc94"/><rect x="488" y="185" width="20" height="20" fill="#e2cb91"/><rect x="508" y="185" width="20" height="20" fill="#e1ca8f"/><rect x="528" y="185" width="20" height="20" fill="#e1c98d"/><rect x="548" y="185" width="20" height="20" fill="#e0c78a"/><rect x="568" y="185" width="20" height="20" fill="#dfc688"/><rect x="588" y="185" width="20" height="20" fill="#dec586"/><rect x="608" y="185" width="20" height="20" fill="#ddc483"/><rect x="628" y="185" width="20" height="20" fill="#dcc281"/><rect x="8" y="205" width="20" height="20" fill="#f2e9cb"/><rect x="28" y="205" width="20" height="20" fill="#f1e7c8"/><rect x="48" y="205" width="20" height="20" fill="#f1e6c5"/><rect x="68" y="205" width="20" height="20" fill="#f0e5c3"/><rect x="88" y="205" width="20" height="20" fill="#efe3c0"/><rect x="108" y="205" width="20" height="20" fill="#efe2be"/><rect x="128" y="205" width="20" height="20" fill="#eee1bb"/><rect x="148" y="205" width="20" height="20" fill="#eee0b9"/><rect x="168" y="205" width="20" height="20" fill="#eddeb6"/><rect x="188" y="205" width="20" height="20" fill="#ecddb4"/><rect x="208" y="205" width="20" height="20" fill="#ecdcb1"/><rect x="228" y="205" width="20" height="20" fill="#ebdbaf"/><rect x="248" y="205" width="20" height="20" fill="#ead9ac"/><rect x="268" y="205" width="20" height="20" fill="#ead8aa"/><rect x="288" y="205" width="20" height="20" fill="#e9d7a7"/><rect x="308" y="205" width="20" height="20" fill="#e8d5a5"/><rect x="328" y="205" width="20" height="20" fill="#e8d4a2"/><rect x="348" y="205" width="20" height="20" fill="#e7d3a0"/><rect x="368" y="205" width="20" height="20" fill="#e6d29d"/><rect x="388" y="205" width="20" height="20" fill="#e5d09b"/><rect x="408" y="205" width="20" height="20" fill="#e5cf99"/><rect x="428" y="205" width="20" height="20" fill="#e4ce96"/><rect x="448" y="205" width="20" height="20" fill="#e3cc94"/><rect x="468" y="205" width="20" height="20" fill="#e2cb91"/><rect x="488" y="205" width="20" height="20" fill="#e1ca8f"/><rect x="508" y="205" width="20" height="20" fill="#e1c98d"/><rect x="528" y="205" width="20" height="20" fill="#e0c78a"/><rect x="548" y="205" width="20" height="20" fill="#dfc688"/><rect x="568" y="205" width="20" height="20" fill="#dec586"/><rect x="588" y="205" width="20" height="20" fill="#ddc383"/><rect x="608" y="205" width="20" height="20" fill="#dcc281"/><rect x="628" y="205" width="20" height="20" fill="#dcc17f"/><rect x="8" y="225" width="20" height="20" fill="#f1e8c8"/><rect x="28" y="225" width="20" height="20" fill="#f1e6c6"/><rect x="48" y="225" width="20" height="20" fill="#f0e5c3"/><rect x="68" y="225" width="20" height="20" fill="#efe4c0"/><rect x="88" y="225" width="20" height="20" fill="#efe2be"/><rect x="108" y="225" width="20" height="20" fill="#eee1bb"/><rect x="128" y="225" width="20" height="20" fill="#eee0b9"/><rect x="148" y="225" width="20" height="20" fill="#eddeb6"/><rect x="168" y="225" width="20" height="20" fill="#ecddb4"/><rect x="188" y="225" width="20" height="20" fill="#ecdcb1"/><rect x="208" y="225" width="20" height="20" fill="#ebdbaf"/><rect x="228" y="225" width="20" height="20" fill="#ead9ac"/><rect x="248" y="225" width="20" height="20" fill="#ead8aa"/><rect x="268" y="225" width="20" height="20" fill="#e9d7a7"/><rect x="288" y="225" width="20" height="20" fill="#e8d5a5"/><rect x="308" y="225" width="20" height="20" fill="#e7d4a2"/><rect x="328" y="225" width="20" height="20" fill="#e7d3a0"/><rect x="348" y="225" width="20" height="20" fill="#e6d19d"/><rect x="368" y="225" width="20" height="20" fill="#e5d09b"/><rect x="388" y="225" width="20" height="20" fill="#e5cf98"/><rect x="408" y="225" width="20" height="20" fill="#e4ce96"/><rect x="428" y="225" width="20" height="20" fill="#e3cc94"/><rect x="448" y="225" width="20" height="20" fill="#e2cb91"/><rect x="468" y="225" width="20" height="20" fill="#e1ca8f"/><rect x="488" y="225" width="20" height="20" fill="#e1c88c"/><rect x="508" y="225" width="20" height="20" fill="#e0c78a"/><rect x="528" y="225" width="20" height="20" fill="#dfc688"/><rect x="548" y="225" width="20" height="20" fill="#dec485"/><rect x="568" y="225" width="20" height="20" fill="#ddc383"/><rect x="588" y="225" width="20" height="20" fill="#dcc281"/><rect x="608" y="225" width="20" height="20" fill="#dbc17e"/><rect x="628" y="225" width="20" height="20" fill="#dbbf7c"/><rect x="8" y="245" width="20" height="20" fill="#f0e6c6"/><rect x="28" y="245" width="20" height="20" fill="#f0e5c3"/><rect x="48" y="245" width="20" height="20" fill="#efe4c0"/><rect x="68" y="245" width="20" height="20" fill="#efe2be"/><rect x="88" y="245" width="20" height="20" fill="#eee1bb"/><rect x="108" y="245" width="20" height="20" fill="#ede0b9"/><rect x="128" y="245" width="20" height="20" fill="#eddeb6"/><rect x="148" y="245" width="20" height="20" fill="#ecddb4"/><rect x="168" y="245" width="20" height="20" fill="#ebdcb1"/><rect x="188" y="245" width="20" height="20" fill="#ebdaae"/><rect x="208" y="245" width="20" height="20" fill="#ead9ac"/><rect x="228" y="245" width="20" height="20" fill="#e9d8a9"/><rect x="248" y="245" width="20" height="20" fill="#e9d6a7"/><rect x="268" y="245" width="20" height="20" fill="#e8d5a4"/><rect x="288" y="245" width="20" height="20" fill="#e7d4a2"/><rect x="308" y="245" width="20" height="20" fill="#e7d39f"/><rect x="328" y="245" width="20" height="20" fill="#e6d19d"/><rect x="348" y="245" width="20" height="20" fill="#e5d09b"/><rect x="368" y="245" width="20" height="20" fill="#e4cf98"/><rect x="388" y="245" width="20" height="20" fill="#e4cd96"/><rect x="408" y="245" width="20" height="20" fill="#e3cc93"/><rect x="428" y="245" width="20" height="20" fill="#e2cb91"/><rect x="448" y="245" width="20" height="20" fill="#e1c98e"/><rect x="468" y="245" width="20" height="20" fill="#e0c88c"/><rect x="488" y="245" width="20" height="20" fill="#e0c78a"/><rect x="508" y="245" width="20" height="20" fill="#dfc587"/><rect x="528" y="245" width="20" height="20" fill="#dec485"/><rect x="548" y="245" width="20" height="20" fill="#ddc382"/><rect x="568" y="245" width="20" height="20" fill="#dcc180"/><rect x="588" y="245" width="20" height="20" fill="#dbc07e"/><rect x="608" y="245" width="20" height="20" fill="#dabf7b"/><rect x="628" y="245" width="20" height="20" fill="#dabd79"/><rect x="8" y="265" width="20" height="20" fill="#efe5c3"/><rect x="28" y="265" width="20" height="20" fill="#efe3c0"/><rect x="48" y="265" width="20" height="20" fill="#eee2bd"/><rect x="68" y="265" width="20" height="20" fill="#eee1bb"/><rect x="88" y="265" width="20" height="20" fill="#eddfb8"/><rect x="108" y="265" width="20" height="20" fill="#ecdeb6"/><rect x="128" y="265" width="20" height="20" fill="#ecddb3"/><rect x="148" y="265" width="20" height="20" fill="#ebdbb1"/><rect x="168" y="265" width="20" height="20" fill="#ebdaae"/><rect x="188" y="265" width="20" height="20" fill="#ead9ab"/><rect x="208" y="265" width="20" height="20" fill="#e9d7a9"/><rect x="228" y="265" width="20" height="20" fill="#e8d6a6"/><rect x="248" y="265" width="20" height="20" fill="#e8d5a4"/><rect x="268" y="265" width="20" height="20" fill="#e7d3a1"/><rect x="288" y="265" width="20" height="20" fill="#e6d29f"/><rect x="308" y="265" width="20" height="20" fill="#e6d19c"/><rect x="328" y="265" width="20" height="20" fill="#e5cf9a"/><rect x="348" y="265" width="20" height="20" fill="#e4ce97"/><rect x="368" y="265" width="20" height="20" fill="#e3cd95"/><rect x="388" y="265" width="20" height="20" fill="#e3cb92"/><rect x="408" y="265" width="20" height="20" fill="#e2ca90"/><rect x="428" y="265" width="20" height="20" fill="#e1c98e"/><rect x="448" y="265" width="20" height="20" fill="#e0c78b"/><rect x="468" y="265" width="20" height="20" fill="#dfc689"/><rect x="488" y="265" width="20" height="20" fill="#dfc586"/><rect x="508" y="265" width="20" height="20" fill="#dec384"/><rect x="528" y="265" width="20" height="20" fill="#ddc282"/><rect x="548" y="265" width="20" height="20" fill="#dcc17f"/><rect x="568" y="265" width="20" height="20" fill="#dbbf7d"/><rect x="588" y="265" width="20" height="20" fill="#dabe7a"/><rect x="608" y="265" width="20" height="20" fill="#d9bd78"/><rect x="628" y="265" width="20" height="20" fill="#d8bb76"/><rect x="8" y="285" width="20" height="20" fill="#efe3bf"/><rect x="28" y="285" width="20" height="20" fill="#eee2bd"/><rect x="48" y="285" width="20" height="20" fill="#ede0ba"/><rect x="68" y="285" width="20" height="20" fill="#eddfb8"/><rect x="88" y="285" width="20" height="20" fill="#ecdeb5"/><rect x="108" y="285" width="20" height="20" fill="#ebdcb2"/><rect x="128" y="285" width="20" height="20" fill="#ebdbb0"/><rect x="148" y="285" width="20" height="20" fill="#eadaad"/><rect x="168" y="285" width="20" height="20" fill="#ead8ab"/><rect x="188" y="285" width="20" height="20" fill="#e9d7a8"/><rect x="208" y="285" width="20" height="20" fill="#e8d6a5"/><rect x="228" y="285" width="20" height="20" fill="#e7d4a3"/><rect x="248" y="285" width="20" height="20" fill="#e7d3a0"/><rect x="268" y="285" width="20" height="20" fill="#e6d19e"/><rect x="288" y="285" width="20" height="20" fill="#e5d09b"/><rect x="308" y="285" width="20" height="20" fill="#e5cf99"/><rect x="328" y="285" width="20" height="20" fill="#e4cd96"/><rect x="348" y="285" width="20" height="20" fill="#e3cc94"/><rect x="368" y="285" width="20" height="20" fill="#e2cb91"/><rect x="388" y="285" width="20" height="20" fill="#e1c98f"/><rect x="408" y="285" width="20" height="20" fill="#e1c88c"/><rect x="428" y="285" width="20" height="20" fill="#e0c78a"/><rect x="448" y="285" width="20" height="20" fill="#dfc588"/><rect x="468" y="285" width="20" height="20" fill="#dec485"/><rect x="488" y="285" width="20" height="20" fill="#ddc283"/><rect x="508" y="285" width="20" height="20" fill="#ddc180"/><rect x="528" y="285" width="20" height="20" fill="#dcc07e"/><rect x="548" y="285" width="20" height="20" fill="#dbbe7c"/><rect x="568" y="285" width="20" height="20" fill="#dabd79"/><rect x="588" y="285" width="20" height="20" fill="#d9bc77"/><rect x="608" y="285" width="20" height="20" fill="#d8ba74"/><rect x="628" y="285" width="20" height="20" fill="#d7b972"/><rect x="8" y="305" width="20" height="20" fill="#eee1bc"/><rect x="28" y="305" width="20" height="20" fill="#ede0b9"/><rect x="48" y="305" width="20" height="20" fill="#ecdeb6"/><rect x="68" y="305" width="20" height="20" fill="#ecddb4"/><rect x="88" y="305" width="20" height="20" fill="#ebdcb1"/><rect x="108" y="305" width="20" height="20" fill="#eadaaf"/><rect x="128" y="305" width="20" height="20" fill="#ead9ac"/><rect x="148" y="305" width="20" height="20" fill="#e9d8a9"/><rect x="168" y="305" width="20" height="20" fill="#e8d6a7"/><rect x="188" y="305" width="20" height="20" fill="#e8d5a4"/><rect x="208" y="305" width="20" height="20" fill="#e7d3a2"/><rect x="228" y="305" width="20" height="20" fill="#e6d29f"/><rect x="248" y="305" width="20" height="20" fill="#e6d19d"/><rect x="268" y="305" width="20" height="20" fill="#e5cf9a"/><rect x="288" y="305" width="20" height="20" fill="#e4ce98"/><rect x="308" y="305" width="20" height="20" fill="#e3cc95"/><rect x="328" y="305" width="20" height="20" fill="#e3cb93"/><rect x="348" y="305" width="20" height="20" fill="#e2ca90"/><rect x="368" y="305" width="20" height="20" fill="#e1c88e"/><rect x="388" y="305" width="20" height="20" fill="#e0c78b"/><rect x="408" y="305" width="20" height="20" fill="#dfc689"/><rect x="428" y="305" width="20" height="20" fill="#dfc486"/><rect x="448" y="305" width="20" height="20" fill="#dec384"/><rect x="468" y="305" width="20" height="20" fill="#ddc181"/><rect x="488" y="305" width="20" height="20" fill="#dcc07f"/><rect x="508" y="305" width="20" height="20" fill="#dbbf7c"/><rect x="528" y="305" width="20" height="20" fill="#dabd7a"/><rect x="548" y="305" width="20" height="20" fill="#dabc78"/><rect x="568" y="305" width="20" height="20" fill="#d9ba75"/><rect x="588" y="305" width="20" height="20" fill="#d8b973"/><rect x="608" y="305" width="20" height="20" fill="#d7b871"/><rect x="628" y="305" width="20" height="20" fill="#d6b66e"/><rect x="8" y="325" width="20" height="20" fill="#ecdfb8"/><rect x="28" y="325" width="20" height="20" fill="#ecdeb5"/><rect x="48" y="325" width="20" height="20" fill="#ebdcb2"/><rect x="68" y="325" width="20" height="20" fill="#eadbb0"/><rect x="88" y="325" width="20" height="20" fill="#ead9ad"/><rect x="108" y="325" width="20" height="20" fill="#e9d8ab"/><rect x="128" y="325" width="20" height="20" fill="#e9d7a8"/><rect x="148" y="325" width="20" height="20" fill="#e8d5a5"/><rect x="168" y="325" width="20" height="20" fill="#e7d4a3"/><rect x="188" y="325" width="20" height="20" fill="#e6d2a0"/><rect x="208" y="325" width="20" height="20" fill="#e6d19e"/><rect x="228" y="325" width="20" height="20" fill="#e5d09b"/><rect x="248" y="325" width="20" height="20" fill="#e4ce99"/><rect x="268" y="325" width="20" height="20" fill="#e4cd96"/><rect x="288" y="325" width="20" height="20" fill="#e3cb93"/><rect x="308" y="325" width="20" height="20" fill="#e2ca91"/><rect x="328" y="325" width="20" height="20" fill="#e1c98e"/><rect x="348" y="325" width="20" height="20" fill="#e1c78c"/><rect x="368" y="325" width="20" height="20" fill="#e0c689"/><rect x="388" y="325" width="20" height="20" fill="#dfc487"/><rect x="408" y="325" width="20" height="20" fill="#dec384"/><rect x="428" y="325" width="20" height="20" fill="#ddc182"/><rect x="448" y="325" width="20" height="20" fill="#dcc080"/><rect x="468" y="325" width="20" height="20" fill="#dcbf7d"/><rect x="488" y="325" width="20" height="20" fill="#dbbd7b"/><rect x="508" y="325" width="20" height="20" fill="#dabc78"/><rect x="528" y="325" width="20" height="20" fill="#d9ba76"/><rect x="548" y="325" width="20" height="20" fill="#d8b973"/><rect x="568" y="325" width="20" height="20" fill="#d7b871"/><rect x="588" y="325" width="20" height="20" fill="#d6b66f"/><rect x="608" y="325" width="20" height="20" fill="#d5b56c"/><rect x="628" y="325" width="20" height="20" fill="#d4b36a"/><rect x="8" y="345" width="20" height="20" fill="#ebddb3"/><rect x="28" y="345" width="20" height="20" fill="#eadbb1"/><rect x="48" y="345" width="20" height="20" fill="#eadaae"/><rect x="68" y="345" width="20" height="20" fill="#e9d8ac"/><rect x="88" y="345" width="20" height="20" fill="#e9d7a9"/><rect x="108" y="345" width="20" height="20" fill="#e8d6a6"/><rect x="128" y="345" width="20" height="20" fill="#e7d4a4"/><rect x="148" y="345" width="20" height="20" fill="#e7d3a1"/><rect x="168" y="345" width="20" height="20" fill="#e6d19e"/><rect x="188" y="345" width="20" height="20" fill="#e5d09c"/><rect x="208" y="345" width="20" height="20" fill="#e4ce99"/><rect x="228" y="345" width="20" height="20" fill="#e4cd97"/><rect x="248" y="345" width="20" height="20" fill="#e3cc94"/><rect x="268" y="345" width="20" height="20" fill="#e2ca92"/><rect x="288" y="345" width="20" height="20" fill="#e1c98f"/><rect x="308" y="345" width="20" height="20" fill="#e1c78c"/><rect x="328" y="345" width="20" height="20" fill="#e0c68a"/><rect x="348" y="345" width="20" height="20" fill="#dfc487"/><rect x="368" y="345" width="20" height="20" fill="#dec385"/><rect x="388" y="345" width="20" height="20" fill="#dec182"/><rect x="408" y="345" width="20" height="20" fill="#ddc080"/><rect x="428" y="345" width="20" height="20" fill="#dcbf7d"/><rect x="448" y="345" width="20" height="20" fill="#dbbd7b"/><rect x="468" y="345" width="20" height="20" fill="#dabc78"/><rect x="488" y="345" width="20" height="20" fill="#d9ba76"/><rect x="508" y="345" width="20" height="20" fill="#d8b974"/><rect x="528" y="345" width="20" height="20" fill="#d8b771"/><rect x="548" y="345" width="20" height="20" fill="#d7b66f"/><rect x="568" y="345" width="20" height="20" fill="#d6b56c"/><rect x="588" y="345" width="20" height="20" fill="#d5b36a"/><rect x="608" y="345" width="20" height="20" fill="#d4b268"/><rect x="628" y="345" width="20" height="20" fill="#d3b065"/><rect x="8" y="365" width="20" height="20" fill="#eadaaf"/><rect x="28" y="365" width="20" height="20" fill="#e9d9ac"/><rect x="48" y="365" width="20" height="20" fill="#e8d7a9"/><rect x="68" y="365" width="20" height="20" fill="#e8d6a7"/><rect x="88" y="365" width="20" height="20" fill="#e7d4a4"/><rect x="108" y="365" width="20" height="20" fill="#e7d3a2"/><rect x="128" y="365" width="20" height="20" fill="#e6d19f"/><rect x="148" y="365" width="20" height="20" fill="#e5d09c"/><rect x="168" y="365" width="20" height="20" fill="#e4ce9a"/><rect x="188" y="365" width="20" height="20" fill="#e4cd97"/><rect x="208" y="365" width="20" height="20" fill="#e3cc94"/><rect x="228" y="365" width="20" height="20" fill="#e2ca92"/><rect x="248" y="365" width="20" height="20" fill="#e2c98f"/><rect x="268" y="365" width="20" height="20" fill="#e1c78d"/><rect x="288" y="365" width="20" height="20" fill="#e0c68a"/><rect x="308" y="365" width="20" height="20" fill="#dfc488"/><rect x="328" y="365" width="20" height="20" fill="#dec385"/><rect x="348" y="365" width="20" height="20" fill="#dec183"/><rect x="368" y="365" width="20" height="20" fill="#ddc080"/><rect x="388" y="365" width="20" height="20" fill="#dcbe7e"/><rect x="408" y="365" width="20" height="20" fill="#dbbd7b"/><rect x="428" y="365" width="20" height="20" fill="#dabc79"/><rect x="448" y="365" width="20" height="20" fill="#d9ba76"/><rect x="468" y="365" width="20" height="20" fill="#d9b974"/><rect x="488" y="365" width="20" height="20" fill="#d8b771"/><rect x="508" y="365" width="20" height="20" fill="#d7b66f"/><rect x="528" y="365" width="20" height="20" fill="#d6b46c"/><rect x="548" y="365" width="20" height="20" fill="#d5b36a"/><rect x="568" y="365" width="20" height="20" fill="#d4b167"/><rect x="588" y="365" width="20" height="20" fill="#d3b065"/><rect x="608" y="365" width="20" height="20" fill="#d2ae63"/><rect x="628" y="365" width="20" height="20" fill="#d1ad60"/><rect x="8" y="385" width="20" height="20" fill="#e8d7aa"/><rect x="28" y="385" width="20" height="20" fill="#e8d6a7"/><rect x="48" y="385" width="20" height="20" fill="#e7d4a4"/><rect x="68" y="385" width="20" height="20" fill="#e6d3a2"/><rect x="88" y="385" width="20" height="20" fill="#e6d19f"/><rect x="108" y="385" width="20" height="20" fill="#e5d09c"/><rect x="128" y="385" width="20" height="20" fill="#e4ce9a"/><rect x="148" y="385" width="20" height="20" fill="#e4cd97"/><rect x="168" y="385" width="20" height="20" fill="#e3cb95"/><rect x="188" y="385" width="20" height="20" fill="#e2ca92"/><rect x="208" y="385" width="20" height="20" fill="#e1c88f"/><rect x="228" y="385" width="20" height="20" fill="#e1c78d"/><rect x="248" y="385" width="20" height="20" fill="#e0c58a"/><rect x="268" y="385" width="20" height="20" fill="#dfc488"/><rect x="288" y="385" width="20" height="20" fill="#dec385"/><rect x="308" y="385" width="20" height="20" fill="#dec182"/><rect x="328" y="385" width="20" height="20" fill="#ddc080"/><rect x="348" y="385" width="20" height="20" fill="#dcbe7d"/><rect x="368" y="385" width="20" height="20" fill="#dbbd7b"/><rect x="388" y="385" width="20" height="20" fill="#dabb78"/><rect x="408" y="385" width="20" height="20" fill="#daba76"/><rect x="428" y="385" width="20" height="20" fill="#d9b873"/><rect x="448" y="385" width="20" height="20" fill="#d8b771"/><rect x="468" y="385" width="20" height="20" fill="#d7b56e"/><rect x="488" y="385" width="20" height="20" fill="#d6b46c"/><rect x="508" y="385" width="20" height="20" fill="#d5b269"/><rect x="528" y="385" width="20" height="20" fill="#d4b167"/><rect x="548" y="385" width="20" height="20" fill="#d3af65"/><rect x="568" y="385" width="20" height="20" fill="#d2ae62"/><rect x="588" y="385" width="20" height="20" fill="#d1ac60"/><rect x="608" y="385" width="20" height="20" fill="#d1ab5d"/><rect x="628" y="385" width="20" height="20" fill="#d0a95b"/><rect x="8" y="405" width="20" height="20" fill="#e7d4a5"/><rect x="28" y="405" width="20" height="20" fill="#e6d3a2"/><rect x="48" y="405" width="20" height="20" fill="#e5d19f"/><rect x="68" y="405" width="20" height="20" fill="#e5d09c"/><rect x="88" y="405" width="20" height="20" fill="#e4ce9a"/><rect x="108" y="405" width="20" height="20" fill="#e3cd97"/><rect x="128" y="405" width="20" height="20" fill="#e3cb94"/><rect x="148" y="405" width="20" height="20" fill="#e2ca92"/><rect x="168" y="405" width="20" height="20" fill="#e1c88f"/><rect x="188" y="405" width="20" height="20" fill="#e1c78d"/><rect x="208" y="405" width="20" height="20" fill="#e0c58a"/><rect x="228" y="405" width="20" height="20" fill="#dfc487"/><rect x="248" y="405" width="20" height="20" fill="#dec285"/><rect x="268" y="405" width="20" height="20" fill="#ddc182"/><rect x="288" y="405" width="20" height="20" fill="#ddbf80"/><rect x="308" y="405" width="20" height="20" fill="#dcbe7d"/><rect x="328" y="405" width="20" height="20" fill="#dbbc7a"/><rect x="348" y="405" width="20" height="20" fill="#dabb78"/><rect x="368" y="405" width="20" height="20" fill="#d9b975"/><rect x="388" y="405" width="20" height="20" fill="#d9b873"/><rect x="408" y="405" width="20" height="20" fill="#d8b670"/><rect x="428" y="405" width="20" height="20" fill="#d7b56e"/><rect x="448" y="405" width="20" height="20" fill="#d6b36b"/><rect x="468" y="405" width="20" height="20" fill="#d5b269"/><rect x="488" y="405" width="20" height="20" fill="#d4b066"/><rect x="508" y="405" width="20" height="20" fill="#d3af64"/><rect x="528" y="405" width="20" height="20" fill="#d2ad61"/><rect x="548" y="405" width="20" height="20" fill="#d2ac5f"/><rect x="568" y="405" width="20" height="20" fill="#d1aa5c"/><rect x="588" y="405" width="20" height="20" fill="#d0a95a"/><rect x="608" y="405" width="20" height="20" fill="#cfa758"/><rect x="628" y="405" width="20" height="20" fill="#cea655"/><rect x="8" y="425" width="20" height="20" fill="#e5d19f"/><rect x="28" y="425" width="20" height="20" fill="#e4cf9c"/><rect x="48" y="425" width="20" height="20" fill="#e4ce99"/><rect x="68" y="425" width="20" height="20" fill="#e3cc97"/><rect x="88" y="425" width="20" height="20" fill="#e2cb94"/><rect x="108" y="425" width="20" height="20" fill="#e2c991"/><rect x="128" y="425" width="20" height="20" fill="#e1c88f"/><rect x="148" y="425" width="20" height="20" fill="#e0c68c"/><rect x="168" y="425" width="20" height="20" fill="#e0c589"/><rect x="188" y="425" width="20" height="20" fill="#dfc387"/><rect x="208" y="425" width="20" height="20" fill="#dec284"/><rect x="228" y="425" width="20" height="20" fill="#ddc082"/><rect x="248" y="425" width="20" height="20" fill="#dcbf7f"/><rect x="268" y="425" width="20" height="20" fill="#dcbd7c"/><rect x="288" y="425" width="20" height="20" fill="#dbbb7a"/><rect x="308" y="425" width="20" height="20" fill="#daba77"/><rect x="328" y="425" width="20" height="20" fill="#d9b875"/><rect x="348" y="425" width="20" height="20" fill="#d8b772"/><rect x="368" y="425" width="20" height="20" fill="#d8b56f"/><rect x="388" y="425" width="20" height="20" fill="#d7b46d"/><rect x="408" y="425" width="20" height="20" fill="#d6b26a"/><rect x="428" y="425" width="20" height="20" fill="#d5b168"/><rect x="448" y="425" width="20" height="20" fill="#d4af65"/><rect x="468" y="425" width="20" height="20" fill="#d3ae63"/><rect x="488" y="425" width="20" height="20" fill="#d2ac60"/><rect x="508" y="425" width="20" height="20" fill="#d1ab5e"/><rect x="528" y="425" width="20" height="20" fill="#d1a95b"/><rect x="548" y="425" width="20" height="20" fill="#d0a859"/><rect x="568" y="425" width="20" height="20" fill="#cfa657"/><rect x="588" y="425" width="20" height="20" fill="#cea554"/><rect x="608" y="425" width="20" height="20" fill="#cda352"/><rect x="628" y="425" width="20" height="20" fill="#cca24f"/><rect x="8" y="445" width="20" height="20" fill="#e3cd99"/><rect x="28" y="445" width="20" height="20" fill="#e3cc96"/><rect x="48" y="445" width="20" height="20" fill="#e2ca93"/><rect x="68" y="445" width="20" height="20" fill="#e1c991"/><rect x="88" y="445" width="20" height="20" fill="#e1c78e"/><rect x="108" y="445" width="20" height="20" fill="#e0c58b"/><rect x="128" y="445" width="20" height="20" fill="#dfc489"/><rect x="148" y="445" width="20" height="20" fill="#dec286"/><rect x="168" y="445" width="20" height="20" fill="#dec183"/><rect x="188" y="445" width="20" height="20" fill="#ddbf81"/><rect x="208" y="445" width="20" height="20" fill="#dcbe7e"/><rect x="228" y="445" width="20" height="20" fill="#dbbc7b"/><rect x="248" y="445" width="20" height="20" fill="#dbbb79"/><rect x="268" y="445" width="20" height="20" fill="#dab976"/><rect x="288" y="445" width="20" height="20" fill="#d9b874"/><rect x="308" y="445" width="20" height="20" fill="#d8b671"/><rect x="328" y="445" width="20" height="20" fill="#d7b56e"/><rect x="348" y="445" width="20" height="20" fill="#d7b36c"/><rect x="368" y="445" width="20" height="20" fill="#d6b169"/><rect x="388" y="445" width="20" height="20" fill="#d5b067"/><rect x="408" y="445" width="20" height="20" fill="#d4ae64"/><rect x="428" y="445" width="20" height="20" fill="#d3ad62"/><rect x="448" y="445" width="20" height="20" fill="#d2ab5f"/><rect x="468" y="445" width="20" height="20" fill="#d1aa5d"/><rect x="488" y="445" width="20" height="20" fill="#d0a85a"/><rect x="508" y="445" width="20" height="20" fill="#cfa758"/><rect x="528" y="445" width="20" height="20" fill="#cfa555"/><rect x="548" y="445" width="20" height="20" fill="#cea453"/><rect x="568" y="445" width="20" height="20" fill="#cda250"/><rect x="588" y="445" width="20" height="20" fill="#cca04e"/><rect x="608" y="445" width="20" height="20" fill="#cb9f4b"/><rect x="628" y="445" width="20" height="20" fill="#ca9d49"/></g>
<path d="M582,65 L620,65 L620,166 Q603,139 574,111 Z" fill="#ead7ae" filter="url(#b1)"/>
<path d="M355,65 L585,65 L585,100 Z" fill="#f0e5cc" filter="url(#b2)"/>
<!-- dark pen -->
<g filter="url(#b2)">
<path d="M358,65 L480,79 L560,94 L588,103 L587,110 L575,112 L480,96 L358,68 Z" fill="#433625"/>
<path d="M420,77 L480,87 L570,104" stroke="#7e6c4c" stroke-width="1.6" fill="none"/>
<path d="M504,92 L512,72 L519,65 L522,65 L515,80 L512,92 Z" fill="#3a3022"/>
<path d="M512,90 C512,78 515,70 520,65 L548,65 C555,70 557,80 553,90 Z" fill="#c5be8c"/>
<path d="M542,65 L576,65 C582,72 585,85 585,100 L560,97 C553,92 552,88 554,80 C556,72 550,67 542,65 Z" fill="#2e281c"/>
</g>
<!-- shape shadow -->
<path id="halo" d="M139.3,136.8 C129.1,124.1 133.0,111.6 148.5,107.0 L246.1,78.0 C259.4,74.0 276.1,78.4 285.8,88.4 L485.7,295.8 C499.4,310.0 501.7,326.9 491.2,336.1 L406.6,409.8 C390.9,423.5 370.0,421.6 356.8,405.4 Z" fill="#f0d9a0" opacity="0.7" filter="url(#b2)"/>
<path d="M136.5,137.4 C126.3,124.7 130.2,112.2 145.7,107.6 L243.3,78.6 C256.6,74.6 273.3,79.0 283.0,89.0 L482.9,296.4 C496.6,310.6 498.9,327.5 488.4,336.7 L403.8,410.4 C388.1,424.1 367.2,422.2 354.0,406.0 Z" fill="#b08038" opacity="0.55" filter="url(#b4)"/>
<path d="M132.5,142.4 C122.3,129.7 126.2,117.2 141.7,112.6 L239.3,83.6 C252.6,79.6 269.3,84.0 279.0,94.0 L478.9,301.4 C492.6,315.6 494.9,332.5 484.4,341.7 L399.8,415.4 C384.1,429.1 363.2,427.2 350.0,411.0 Z" fill="#a2732c" opacity="0.85" filter="url(#b4)"/>
<path d="M135.5,138.4 C125.3,125.7 129.2,113.2 144.7,108.6 L242.3,79.6 C255.6,75.6 272.3,80.0 282.0,90.0 L481.9,297.4 C495.6,311.6 497.9,328.5 487.4,337.7 L402.8,411.4 C387.1,425.1 366.2,423.2 353.0,407.0 Z" fill="#3e2408" filter="url(#b1)"/>
<path d="M137.5,137.4 C127.3,124.7 131.2,112.2 146.7,107.6 L244.3,78.6 C257.6,74.6 274.3,79.0 284.0,89.0 L483.9,296.4 C497.6,310.6 499.9,327.5 489.4,336.7 L404.8,410.4 C389.1,424.1 368.2,422.2 355.0,406.0 Z" fill="#9a6530" filter="url(#b1)"/>
<path d="M138.3,137.0 C128.1,124.3 132.0,111.8 147.5,107.2 L245.1,78.2 C258.4,74.2 275.1,78.6 284.8,88.6 L484.7,296.0 C498.4,310.2 500.7,327.1 490.2,336.3 L405.6,410.0 C389.9,423.7 369.0,421.8 355.8,405.6 Z" fill="#915f2e" filter="url(#b1)"/>
</svg>
<div class="a" style="left:642px;top:41px;width:159px;height:416px;background:#535553"></div>
<div class="a" style="left:642px;top:41px;width:1px;height:416px;background:#2e2e2e"></div>
<div class="a" style="left:643px;top:41px;width:158px;height:11px;background:#3b3b3b"></div>
<div class="t" style="left:782px;top:43px;font-size:6px;letter-spacing:-2px;color:#c8c8c8">◂◂</div>
<div class="t" style="left:793px;top:42px;font-size:8px;color:#c8c8c8">×</div>
<div class="a" style="left:643px;top:52px;width:158px;height:11px;background:#444544"></div>
<div class="a" style="left:644px;top:52px;width:23px;height:11px;background:#535553"></div>
<div class="t" style="left:647px;top:53px;font-size:9px;color:#dcdcdc">属性</div>
<div class="a" style="left:787px;top:56px;width:3px;height:2px;background:#bbb"></div>
<div class="a" style="left:791px;top:55px;width:8px;height:1px;background:#bbb"></div>
<div class="a" style="left:791px;top:57px;width:8px;height:1px;background:#bbb"></div>
<div class="a" style="left:791px;top:59px;width:8px;height:1px;background:#bbb"></div>
<div class="a" style="left:650px;top:68px;width:13px;height:12px;background:#bdbdbd;border:1px solid #2e2e2e"></div>
<div class="a" style="left:654px;top:71px;width:5px;height:5px;border-radius:50%;background:#2a2a2a"></div>
<div class="t" style="left:668px;top:69px;color:#dedede">蒙版</div>
<div class="a" style="left:643px;top:83px;width:151px;height:1px;background:#454745"></div>
<div class="a" style="left:643px;top:84px;width:151px;height:1px;background:#5c5e5c"></div>
<div class="a" style="left:648px;top:93px;width:20px;height:14px;background:#8c8c8c;border:1px solid #2e2e2e"></div>
<svg style="left:648px;top:93px" width="20" height="14"><path d="M5 3 L9 1 L17 9 L13 12 Z" fill="#f0f0f0"/></svg>
<div class="t" style="left:671px;top:95px;color:#dedede">形状路径</div>
<div class="a" style="left:760px;top:94px;width:11px;height:11px;background:#d0d0d0;border:1px solid #444"></div>
<div class="a" style="left:764px;top:98px;width:7px;height:7px;background:#555"></div>
<div class="a" style="left:773px;top:92px;width:13px;height:14px;background:#3f403f;border-radius:2px"></div>
<div class="a" style="left:776px;top:95px;width:7px;height:8px;border:1px solid #d8d8d8"></div>
<div class="a" style="left:794px;top:85px;width:7px;height:120px;background:#414241"></div>
<div class="a" style="left:795px;top:92px;width:6px;height:72px;background:#787878;border-radius:2px"></div>
<svg style="left:795px;top:86px" width="6" height="4"><path d="M0 4 L3 0 L6 4Z" fill="#cfcfcf"/></svg>
<svg style="left:795px;top:200px" width="6" height="4"><path d="M0 0 L3 4 L6 0Z" fill="#cfcfcf"/></svg>
<div class="a" style="left:643px;top:119px;width:151px;height:1px;background:#454745"></div>
<div class="a" style="left:643px;top:120px;width:151px;height:1px;background:#5c5e5c"></div>
<div class="t" style="left:651px;top:132px;color:#dedede">浓度:</div>
<div class="a" style="left:750px;top:131px;width:35px;height:12px;background:#3a3b3a"></div>
<div class="t" style="left:753px;top:133px;font-size:8px;color:#e0e0e0">100%</div>
<div class="a" style="left:651px;top:146px;width:133px;height:2px;background:#333433"></div>
<svg style="left:781px;top:144px" width="7" height="5"><path d="M0 5 L3.5 0 L7 5Z" fill="#c9c9c9"/></svg>
<div class="t" style="left:651px;top:166px;color:#dedede">羽化:</div>
<div class="a" style="left:750px;top:167px;width:35px;height:12px;background:#3a3b3a"></div>
<div class="t" style="left:752px;top:169px;font-size:8px;color:#e0e0e0">3.7 像素</div>
<div class="a" style="left:651px;top:181px;width:133px;height:2px;background:#333433"></div>
<svg style="left:675px;top:179px" width="7" height="5"><path d="M0 5 L3.5 0 L7 5Z" fill="#c9c9c9"/></svg>
<div class="a" style="left:717px;top:207px;width:11px;height:9px;border:1px dashed #cfcfcf;border-radius:3px"></div>
<svg style="left:734px;top:207px" width="12" height="9"><path d="M1 4.5 Q6 -1 11 4.5 Q6 10 1 4.5Z" fill="none" stroke="#9a9a9a"/><circle cx="6" cy="4.5" r="1.6" fill="#9a9a9a"/></svg>
<div class="a" style="left:753px;top:205px;width:18px;height:13px;background:#3f403f"></div>
<svg style="left:756px;top:207px" width="12" height="9"><path d="M1 4.5 Q6 -1 11 4.5 Q6 10 1 4.5Z" fill="#d8d8d8"/><circle cx="6" cy="4.5" r="1.8" fill="#3f403f"/></svg>
<svg style="left:775px;top:206px" width="9" height="11"><path d="M1 2h7 M3 1h3 M2 3v7h5v-7" fill="none" stroke="#8a8a8a"/></svg>
<div class="a" style="left:643px;top:218px;width:158px;height:4px;background:#464846"></div>
<div class="a" style="left:717px;top:219px;width:2px;height:2px;background:#888"></div>
<div class="a" style="left:721px;top:219px;width:2px;height:2px;background:#888"></div>
<div class="a" style="left:725px;top:219px;width:2px;height:2px;background:#888"></div>
<div class="a" style="left:643px;top:222px;width:158px;height:10px;background:#3b3b3b"></div>
<div class="t" style="left:782px;top:224px;font-size:6px;letter-spacing:-2px;color:#c8c8c8">◂◂</div>
<div class="t" style="left:793px;top:223px;font-size:8px;color:#c8c8c8">×</div>
<div class="a" style="left:643px;top:232px;width:158px;height:11px;background:#444544"></div>
<div class="a" style="left:644px;top:232px;width:24px;height:11px;background:#535553"></div>
<div class="t" style="left:647px;top:233px;color:#dcdcdc">图层</div>
<div class="a" style="left:668px;top:233px;width:1px;height:10px;background:#3a3a3a"></div>
<div class="t" style="left:672px;top:233px;color:#b8b8b8">通道</div>
<div class="a" style="left:693px;top:233px;width:1px;height:10px;background:#3a3a3a"></div>
<div class="t" style="left:697px;top:233px;color:#b8b8b8">路径</div>
<div class="a" style="left:717px;top:233px;width:1px;height:10px;background:#3a3a3a"></div>
<div class="a" style="left:787px;top:236px;width:3px;height:2px;background:#bbb"></div>
<div class="a" style="left:791px;top:235px;width:8px;height:1px;background:#bbb"></div>
<div class="a" style="left:791px;top:237px;width:8px;height:1px;background:#bbb"></div>
<div class="a" style="left:791px;top:239px;width:8px;height:1px;background:#bbb"></div>
<div class="a" style="left:646px;top:246px;width:43px;height:12px;background:#5e5f5e;border:1px solid #3a3a3a;border-radius:2px"></div>
<div class="t" style="left:649px;top:247px;color:#e8e8e8">⌕ 类型</div>
<div class="t" style="left:683px;top:247px;font-size:7px;color:#ccc">÷</div>
<svg style="left:705px;top:247px" width="9" height="9"><rect x="0.5" y="0.5" width="8" height="8" fill="none" stroke="#cfcfcf"/><path d="M1 7 L4 4 L6 6 L8 3 V8 H1Z" fill="#cfcfcf"/></svg>
<svg style="left:719px;top:247px" width="9" height="9"><circle cx="4.5" cy="4.5" r="3.8" fill="#cfcfcf"/><path d="M2 6 L7 3" stroke="#666" stroke-width="1.5"/></svg>
<div class="t" style="left:734px;top:246px;font-family:'Liberation Serif',serif;font-size:10px;color:#d6d6d6">T</div>
<svg style="left:749px;top:247px" width="9" height="9"><rect x="1.5" y="1.5" width="6" height="6" fill="none" stroke="#cfcfcf"/><rect x="0" y="0" width="2" height="2" fill="#cfcfcf"/><rect x="7" y="7" width="2" height="2" fill="#cfcfcf"/><rect x="7" y="0" width="2" height="2" fill="#cfcfcf"/><rect x="0" y="7" width="2" height="2" fill="#cfcfcf"/></svg>
<svg style="left:764px;top:247px" width="9" height="9"><path d="M1 4h7v5h-7z M3 1h3v3" fill="#cfcfcf" stroke="#cfcfcf"/></svg>
<div class="a" style="left:787px;top:246px;width:6px;height:12px;background:#2e2e2e;border-radius:2px"></div>
<div class="a" style="left:788px;top:247px;width:4px;height:4px;background:#9a9a9a;border-radius:1px"></div>
<div class="a" style="left:646px;top:264px;width:69px;height:12px;background:#5e5f5e;border:1px solid #3a3a3a;border-radius:2px"></div>
<div class="t" style="left:651px;top:265px;color:#e8e8e8">正常</div>
<div class="t" style="left:709px;top:265px;font-size:7px;color:#ccc">÷</div>
<div class="t" style="left:720px;top:265px;color:#dedede">不透明度:</div>
<div class="a" style="left:757px;top:263px;width:24px;height:13px;background:#363736"></div>
<div class="t" style="left:759px;top:265px;font-size:8px;color:#e6e6e6">100%</div>
<div class="a" style="left:781px;top:263px;width:12px;height:13px;background:#6a6b6a"></div>
<div class="a" style="left:785px;top:269px;width:4px;height:1px;background:#ddd"></div>
<div class="t" style="left:646px;top:283px;color:#dedede">锁定:</div>
<div class="a" style="left:671px;top:284px;width:7px;height:7px;background:#7a7a7a"></div>
<svg style="left:683px;top:282px" width="12" height="10"><path d="M1 9 L11 1" stroke="#8a8a8a" stroke-width="1.5"/></svg>
<svg style="left:697px;top:282px" width="10" height="10"><path d="M5 0v10 M0 5h10" stroke="#d0d0d0"/><path d="M5 0l-2 2h4z M5 10l-2-2h4z M0 5l2-2v4z M10 5l-2-2v4z" fill="#d0d0d0"/></svg>
<svg style="left:711px;top:282px" width="8" height="10"><path d="M2 4V2.5a2 2 0 0 1 4 0V4" fill="none" stroke="#d0d0d0"/><rect x="1" y="4" width="6" height="5" fill="#d0d0d0"/></svg>
<div class="t" style="left:737px;top:283px;color:#dedede">填充:</div>
<div class="a" style="left:757px;top:281px;width:24px;height:13px;background:#363736"></div>
<div class="t" style="left:759px;top:283px;font-size:8px;color:#e6e6e6">100%</div>
<div class="a" style="left:781px;top:281px;width:12px;height:13px;background:#6a6b6a"></div>
<div class="a" style="left:785px;top:287px;width:4px;height:1px;background:#ddd"></div>
<div class="a" style="left:643px;top:296px;width:151px;height:1px;background:#404240"></div>
<div class="a" style="left:643px;top:297px;width:151px;height:1px;background:#5a5c5a"></div>
<div class="a" style="left:663px;top:298px;width:131px;height:24px;background:#6b7d92"></div>
<div class="a" style="left:642px;top:322px;width:152px;height:1px;background:#424442"></div>
<div class="a" style="left:661px;top:298px;width:1px;height:24px;background:#474947"></div>
<svg style="left:648px;top:307px" width="9" height="7"><path d="M0.5 3.5 Q4.5 -1 8.5 3.5 Q4.5 8 0.5 3.5Z" fill="#cfcfcf"/><circle cx="4.5" cy="3.7" r="1.5" fill="#3a3a3a"/></svg>
<div class="t" style="left:667px;top:305px;font-size:7px;color:#ccc">↓</div>
<div class="a" style="left:673px;top:300px;width:22px;height:21px;border:1px solid #f2f2f2;background:#e9e4df"></div>
<div class="a" style="left:674px;top:301px;width:20px;height:19px;background-image:linear-gradient(45deg,#cfcac5 25%,transparent 25%,transparent 75%,#cfcac5 75%),linear-gradient(45deg,#cfcac5 25%,transparent 25%,transparent 75%,#cfcac5 75%);background-size:6px 6px;background-position:0 0,3px 3px"></div>
<svg style="left:674px;top:301px" width="20" height="19"><path d="M0 5 L6 0 L13 0 L20 7 L20 16 L12 19 Z" fill="#a06a2e"/><path d="M13 0 L20 7 L20 0Z" fill="#e9e4df" opacity="0.6"/></svg>
<svg style="left:674px;top:301px" width="20" height="19"><path d="M0 8 L4 5 L9 13 L5 17 L0 14 Z" fill="#d8d23a" opacity="0.9"/></svg>
<div class="a" style="left:686px;top:311px;width:9px;height:10px;background:#262626"></div>
<div class="a" style="left:688px;top:313px;width:6px;height:6px;border:1px solid #9a9a9a;background:#686868"></div>
<div class="t" style="left:700px;top:306px;color:#e4e4e4;">圆角矩形 1 拷贝 5</div>
<div class="a" style="left:642px;top:346px;width:152px;height:1px;background:#424442"></div>
<div class="a" style="left:661px;top:323px;width:1px;height:23px;background:#474947"></div>
<svg style="left:648px;top:332px" width="9" height="7"><path d="M0.5 3.5 Q4.5 -1 8.5 3.5 Q4.5 8 0.5 3.5Z" fill="#cfcfcf"/><circle cx="4.5" cy="3.7" r="1.5" fill="#3a3a3a"/></svg>
<div class="t" style="left:667px;top:330px;font-size:7px;color:#ccc">↓</div>
<div class="a" style="left:673px;top:325px;width:22px;height:21px;border:1px solid #1e1e1e;background:#e9e4df"></div>
<div class="a" style="left:674px;top:326px;width:20px;height:19px;background-image:linear-gradient(45deg,#cfcac5 25%,transparent 25%,transparent 75%,#cfcac5 75%),linear-gradient(45deg,#cfcac5 25%,transparent 25%,transparent 75%,#cfcac5 75%);background-size:6px 6px;background-position:0 0,3px 3px"></div>
<svg style="left:674px;top:326px" width="20" height="19"><path d="M0 5 L6 0 L13 0 L20 7 L20 16 L12 19 Z" fill="#a06a2e"/><path d="M13 0 L20 7 L20 0Z" fill="#e9e4df" opacity="0.6"/></svg>
<div class="a" style="left:686px;top:336px;width:9px;height:10px;background:#262626"></div>
<div class="a" style="left:688px;top:338px;width:6px;height:6px;border:1px solid #9a9a9a;background:#686868"></div>
<div class="t" style="left:700px;top:331px;color:#e4e4e4;">圆角矩形 1 拷贝 3</div>
<div class="a" style="left:642px;top:371px;width:152px;height:1px;background:#424442"></div>
<div class="a" style="left:661px;top:347px;width:1px;height:24px;background:#474947"></div>
<svg style="left:648px;top:356px" width="9" height="7"><path d="M0.5 3.5 Q4.5 -1 8.5 3.5 Q4.5 8 0.5 3.5Z" fill="#cfcfcf"/><circle cx="4.5" cy="3.7" r="1.5" fill="#3a3a3a"/></svg>
<div class="a" style="left:664px;top:349px;width:22px;height:21px;border:1px solid #1e1e1e;background:#e9e4df"></div>
<div class="a" style="left:665px;top:350px;width:20px;height:19px;background-image:linear-gradient(45deg,#cfcac5 25%,transparent 25%,transparent 75%,#cfcac5 75%),linear-gradient(45deg,#cfcac5 25%,transparent 25%,transparent 75%,#cfcac5 75%);background-size:6px 6px;background-position:0 0,3px 3px"></div>
<svg style="left:665px;top:350px" width="20" height="19"><path d="M0 5 L6 0 L13 0 L20 7 L20 16 L12 19 Z" fill="#5a3215"/><path d="M13 0 L20 7 L20 0Z" fill="#e9e4df" opacity="0.6"/></svg>
<div class="a" style="left:677px;top:360px;width:9px;height:10px;background:#262626"></div>
<div class="a" style="left:679px;top:362px;width:6px;height:6px;border:1px solid #9a9a9a;background:#686868"></div>
<div class="t" style="left:691px;top:355px;color:#e4e4e4;text-decoration:underline;">圆角矩形 1 拷贝 2</div>
<div class="a" style="left:642px;top:396px;width:152px;height:1px;background:#424442"></div>
<div class="a" style="left:661px;top:372px;width:1px;height:24px;background:#474947"></div>
<svg style="left:648px;top:381px" width="9" height="7"><path d="M0.5 3.5 Q4.5 -1 8.5 3.5 Q4.5 8 0.5 3.5Z" fill="#cfcfcf"/><circle cx="4.5" cy="3.7" r="1.5" fill="#3a3a3a"/></svg>
<div class="a" style="left:664px;top:374px;width:22px;height:21px;border:1px solid #1e1e1e;background:#e9e4df"></div>
<div class="a" style="left:665px;top:375px;width:20px;height:19px;background-image:linear-gradient(45deg,#cfcac5 25%,transparent 25%,transparent 75%,#cfcac5 75%),linear-gradient(45deg,#cfcac5 25%,transparent 25%,transparent 75%,#cfcac5 75%);background-size:6px 6px;background-position:0 0,3px 3px"></div>
<svg style="left:665px;top:375px" width="20" height="19"><path d="M0 5 L6 0 L13 0 L20 7 L20 16 L12 19 Z" fill="#93602a"/><path d="M13 0 L20 7 L20 0Z" fill="#e9e4df" opacity="0.6"/></svg>
<div class="a" style="left:677px;top:385px;width:9px;height:10px;background:#262626"></div>
<div class="a" style="left:679px;top:387px;width:6px;height:6px;border:1px solid #9a9a9a;background:#686868"></div>
<div class="t" style="left:691px;top:380px;color:#e4e4e4;">圆角矩形 1 拷贝 4</div>
<div class="a" style="left:642px;top:421px;width:152px;height:1px;background:#424442"></div>
<div class="a" style="left:661px;top:397px;width:1px;height:24px;background:#474947"></div>
<svg style="left:648px;top:406px" width="9" height="7"><path d="M0.5 3.5 Q4.5 -1 8.5 3.5 Q4.5 8 0.5 3.5Z" fill="#cfcfcf"/><circle cx="4.5" cy="3.7" r="1.5" fill="#3a3a3a"/></svg>
<div class="a" style="left:664px;top:399px;width:22px;height:21px;border:1px solid #1e1e1e;background:#e9e4df"></div>
<div class="a" style="left:665px;top:400px;width:20px;height:19px;background-image:linear-gradient(45deg,#cfcac5 25%,transparent 25%,transparent 75%,#cfcac5 75%),linear-gradient(45deg,#cfcac5 25%,transparent 25%,transparent 75%,#cfcac5 75%);background-size:6px 6px;background-position:0 0,3px 3px"></div>
<svg style="left:665px;top:400px" width="20" height="19"><path d="M0 6 L7 0 L20 11 L20 17 L13 19 Z" fill="#f0c070" opacity="0.85"/></svg>
<div class="a" style="left:677px;top:410px;width:9px;height:10px;background:#262626"></div>
<div class="a" style="left:679px;top:412px;width:6px;height:6px;border:1px solid #9a9a9a;background:#686868"></div>
<div class="t" style="left:691px;top:405px;color:#e4e4e4;">圆角矩形 1</div>
<div class="a" style="left:642px;top:436px;width:152px;height:1px;background:#424442"></div>
<div class="a" style="left:661px;top:422px;width:1px;height:14px;background:#474947"></div>
<svg style="left:648px;top:426px" width="9" height="7"><path d="M0.5 3.5 Q4.5 -1 8.5 3.5 Q4.5 8 0.5 3.5Z" fill="#cfcfcf"/><circle cx="4.5" cy="3.7" r="1.5" fill="#3a3a3a"/></svg>
<svg style="left:665px;top:426px" width="5" height="7"><path d="M0 0 L5 3.5 L0 7Z" fill="#dcdcdc"/></svg>
<svg style="left:672px;top:424px" width="11" height="9"><path d="M0 1h4l1 1h6v7h-11z" fill="#cfcfcf"/></svg>
<div class="t" style="left:690px;top:425px;color:#e4e4e4">背景</div>
<div class="a" style="left:794px;top:298px;width:7px;height:145px;background:#414241"></div>
<div class="a" style="left:795px;top:310px;width:6px;height:66px;background:#787878;border-radius:2px"></div>
<svg style="left:795px;top:301px" width="6" height="4"><path d="M0 4 L3 0 L6 4Z" fill="#cfcfcf"/></svg>
<svg style="left:795px;top:435px" width="6" height="4"><path d="M0 0 L3 4 L6 0Z" fill="#cfcfcf"/></svg>
<div class="a" style="left:643px;top:442px;width:158px;height:1px;background:#404240"></div>
<div class="a" style="left:643px;top:443px;width:158px;height:14px;background:#535553"></div>
<svg style="left:672px;top:446px" width="10" height="6"><rect x="0.5" y="0.5" width="9" height="5" rx="2.5" fill="none" stroke="#cfcfcf"/><path d="M3 3h4" stroke="#cfcfcf"/></svg>
<div class="t" style="left:690px;top:444px;font-size:8px;font-style:italic;color:#d4d4d4">fx.</div>
<div class="a" style="left:707px;top:445px;width:9px;height:8px;background:#d0d0d0"></div>
<div class="a" style="left:709px;top:447px;width:5px;height:4px;border-radius:50%;background:#444"></div>
<svg style="left:724px;top:445px" width="10" height="9"><circle cx="4.5" cy="4.5" r="4" fill="#cfcfcf"/><path d="M2 7 L7 2" stroke="#555" stroke-width="1.5"/></svg>
<svg style="left:741px;top:445px" width="11" height="9"><path d="M0 1h4l1 1h6v7h-11z" fill="#cfcfcf"/></svg>
<div class="a" style="left:758px;top:445px;width:9px;height:9px;background:#cfcfcf"></div>
<div class="a" style="left:761px;top:448px;width:6px;height:6px;background:#8a8a8a"></div>
<svg style="left:775px;top:444px" width="9" height="11"><path d="M1 2h7 M3 1h3" stroke="#cfcfcf"/><rect x="2" y="3" width="5" height="7" fill="#cfcfcf"/></svg>
</body></html>
